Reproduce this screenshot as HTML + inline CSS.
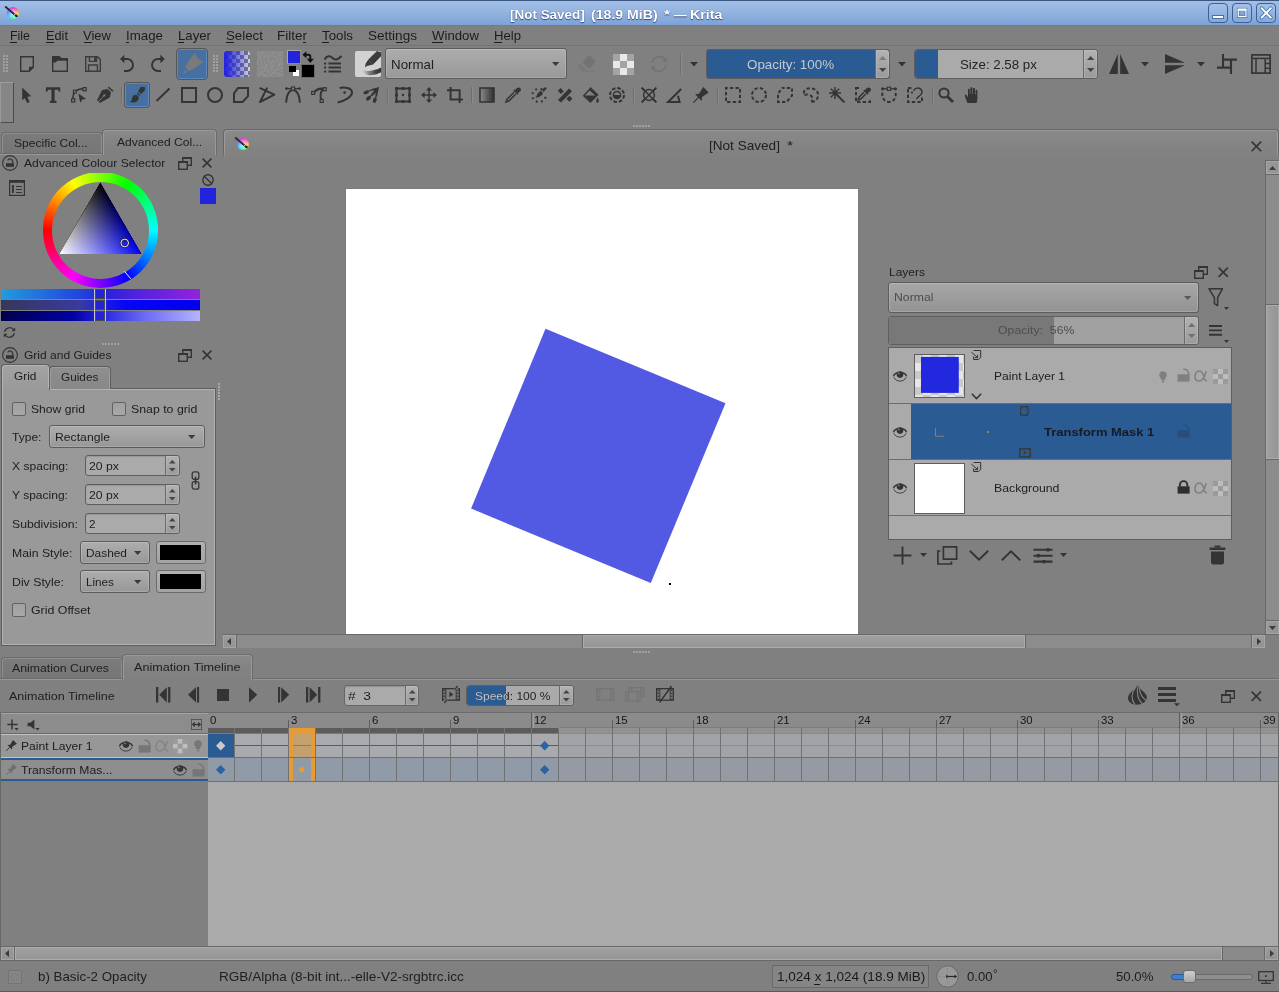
<!DOCTYPE html>
<html><head><meta charset="utf-8"><title>Krita</title>
<style>
html,body{margin:0;padding:0;}
body{width:1279px;height:992px;overflow:hidden;background:#808080;position:relative;font-family:"Liberation Sans",sans-serif;}
div,svg,span.t{position:absolute;box-sizing:border-box;}
span.t{white-space:pre;transform-origin:0 50%;line-height:normal;}
svg{overflow:visible;}
</style></head><body>
<div style="left:0px;top:0px;width:1279px;height:26px;background:linear-gradient(#a2bfe7,#94b4e1 45%,#7ba1d5);"></div>
<div style="left:0px;top:0px;width:1279px;height:1px;background:#3b5681;"></div>
<div style="left:0px;top:25px;width:1279px;height:1px;background:#5b80b6;"></div>
<div style="left:6.8px;top:6.7px;width:12.6px;height:12.6px;border-radius:50%;background:radial-gradient(circle at 48% 52%,rgba(235,235,255,.8) 0,rgba(235,235,255,.45) 30%,rgba(255,255,255,0) 64%),conic-gradient(from 0deg,#ff30e0,#ff5ca8 45deg,#ffc848 100deg,#c0ff48 135deg,#40ffb8 180deg,#30dcff 225deg,#4888ff 270deg,#b048ff 318deg,#ff30e0);"></div>
<svg style="left:4.1px;top:4px;" width="18" height="18" viewBox="0 0 18 18"><path d="M1.70 3.00 L12.40 11.90" stroke="#2a2a30" stroke-width="1.9" stroke-linecap="round"/><circle cx="10.80" cy="10.60" r="0.9" fill="#b8b8c0"/><ellipse cx="12.40" cy="11.90" rx="1.5" ry="1.1" transform="rotate(40 12.40 11.90)" fill="#18181c"/></svg>
<span class="t" style="left:510.30px;top:6.77px;font-size:13.4px;color:#fff;font-weight:bold;transform:scaleX(1.0046);text-shadow:0 1px 1px rgba(30,50,100,.75),0 0 1px rgba(40,60,110,.6);">[Not Saved]</span>
<span class="t" style="left:591.00px;top:6.77px;font-size:13.4px;color:#fff;font-weight:bold;transform:scaleX(1.0538);text-shadow:0 1px 1px rgba(30,50,100,.75),0 0 1px rgba(40,60,110,.6);">(18.9 MiB)</span>
<span class="t" style="left:664.40px;top:6.77px;font-size:13.4px;color:#fff;font-weight:bold;transform:scaleX(1.1698);text-shadow:0 1px 1px rgba(30,50,100,.75),0 0 1px rgba(40,60,110,.6);">*</span>
<span class="t" style="left:674.00px;top:6.77px;font-size:13.4px;color:#fff;font-weight:bold;transform:scaleX(0.9478);text-shadow:0 1px 1px rgba(30,50,100,.75),0 0 1px rgba(40,60,110,.6);">—</span>
<span class="t" style="left:690.20px;top:6.77px;font-size:13.4px;color:#fff;font-weight:bold;transform:scaleX(1.0645);text-shadow:0 1px 1px rgba(30,50,100,.75),0 0 1px rgba(40,60,110,.6);">Krita</span>
<div style="left:1208px;top:3px;width:20px;height:20px;border:1px solid #3f6092;border-radius:4px;background:linear-gradient(#a3c0e8,#86a9da);"></div>
<div style="left:1232px;top:3px;width:20px;height:20px;border:1px solid #3f6092;border-radius:4px;background:linear-gradient(#a3c0e8,#86a9da);"></div>
<div style="left:1256px;top:3px;width:20px;height:20px;border:1px solid #3f6092;border-radius:4px;background:linear-gradient(#a3c0e8,#86a9da);"></div>
<svg style="left:1208px;top:3px;" width="20" height="20" viewBox="0 0 20 20"><rect x="4.5" y="12.5" width="11" height="3" fill="#fff" stroke="#4670a8" stroke-width="1"/></svg>
<svg style="left:1232px;top:3px;" width="20" height="20" viewBox="0 0 20 20"><rect x="6.3" y="6.2" width="7.6" height="7.6" fill="#7fa4d6" stroke="#4670a8" stroke-width="2.6"/><rect x="6.3" y="6.4" width="7.6" height="7.2" fill="none" stroke="#fff" stroke-width="1.2"/><rect x="5.7" y="5.6" width="8.8" height="2.1" fill="#fff"/></svg>
<svg style="left:1256px;top:3px;" width="20" height="20" viewBox="0 0 20 20"><path d="M5.6 5.2 L14.8 14.6 M14.8 5.2 L5.6 14.6" stroke="#4670a8" stroke-width="3.6" stroke-linecap="round"/><path d="M5.6 5.2 L14.8 14.6 M14.8 5.2 L5.6 14.6" stroke="#fff" stroke-width="2" stroke-linecap="round"/></svg>
<div style="left:0px;top:45px;width:1279px;height:1px;background:#737373;"></div>
<span class="t" style="left:10.00px;top:28.86px;font-size:12.2px;color:#1c1c1c;transform:scaleX(1.0173);">File</span>
<div style="left:10px;top:42px;width:7px;height:1px;background:#1c1c1c;"></div>
<span class="t" style="left:46.00px;top:28.86px;font-size:12.2px;color:#1c1c1c;transform:scaleX(1.0465);">Edit</span>
<div style="left:46px;top:42px;width:8px;height:1px;background:#1c1c1c;"></div>
<span class="t" style="left:83.00px;top:28.86px;font-size:12.2px;color:#1c1c1c;transform:scaleX(1.0677);">View</span>
<div style="left:84px;top:42px;width:8px;height:1px;background:#1c1c1c;"></div>
<span class="t" style="left:126.00px;top:28.86px;font-size:12.2px;color:#1c1c1c;transform:scaleX(1.0912);">Image</span>
<div style="left:126px;top:42px;width:3px;height:1px;background:#1c1c1c;"></div>
<span class="t" style="left:178.00px;top:28.86px;font-size:12.2px;color:#1c1c1c;transform:scaleX(1.0813);">Layer</span>
<div style="left:178px;top:42px;width:6px;height:1px;background:#1c1c1c;"></div>
<span class="t" style="left:226.00px;top:28.86px;font-size:12.2px;color:#1c1c1c;transform:scaleX(1.0912);">Select</span>
<div style="left:226px;top:42px;width:8px;height:1px;background:#1c1c1c;"></div>
<span class="t" style="left:277.00px;top:28.86px;font-size:12.2px;color:#1c1c1c;transform:scaleX(1.1065);">Filter</span>
<div style="left:303px;top:42px;width:3px;height:1px;background:#1c1c1c;"></div>
<span class="t" style="left:322.00px;top:28.86px;font-size:12.2px;color:#1c1c1c;transform:scaleX(1.0884);">Tools</span>
<div style="left:322px;top:42px;width:7px;height:1px;background:#1c1c1c;"></div>
<span class="t" style="left:368.00px;top:28.86px;font-size:12.2px;color:#1c1c1c;transform:scaleX(1.1115);">Settings</span>
<div style="left:396px;top:42px;width:7px;height:1px;background:#1c1c1c;"></div>
<span class="t" style="left:432.00px;top:28.86px;font-size:12.2px;color:#1c1c1c;transform:scaleX(1.0831);">Window</span>
<div style="left:432px;top:42px;width:11px;height:1px;background:#1c1c1c;"></div>
<span class="t" style="left:494.00px;top:28.86px;font-size:12.2px;color:#1c1c1c;transform:scaleX(1.0760);">Help</span>
<div style="left:494px;top:42px;width:8px;height:1px;background:#1c1c1c;"></div>
<svg style="left:3px;top:55px;" width="6" height="18" viewBox="0 0 6 18"><rect x="0" y="0" width="2" height="2" fill="#a0a0a0"/><rect x="3" y="0" width="2" height="2" fill="#a0a0a0"/><rect x="0" y="3" width="2" height="2" fill="#a0a0a0"/><rect x="3" y="3" width="2" height="2" fill="#a0a0a0"/><rect x="0" y="6" width="2" height="2" fill="#a0a0a0"/><rect x="3" y="6" width="2" height="2" fill="#a0a0a0"/><rect x="0" y="9" width="2" height="2" fill="#a0a0a0"/><rect x="3" y="9" width="2" height="2" fill="#a0a0a0"/><rect x="0" y="12" width="2" height="2" fill="#a0a0a0"/><rect x="3" y="12" width="2" height="2" fill="#a0a0a0"/><rect x="0" y="15" width="2" height="2" fill="#a0a0a0"/><rect x="3" y="15" width="2" height="2" fill="#a0a0a0"/></svg>
<svg style="left:213px;top:55px;" width="6" height="18" viewBox="0 0 6 18"><rect x="0" y="0" width="2" height="2" fill="#a0a0a0"/><rect x="3" y="0" width="2" height="2" fill="#a0a0a0"/><rect x="0" y="3" width="2" height="2" fill="#a0a0a0"/><rect x="3" y="3" width="2" height="2" fill="#a0a0a0"/><rect x="0" y="6" width="2" height="2" fill="#a0a0a0"/><rect x="3" y="6" width="2" height="2" fill="#a0a0a0"/><rect x="0" y="9" width="2" height="2" fill="#a0a0a0"/><rect x="3" y="9" width="2" height="2" fill="#a0a0a0"/><rect x="0" y="12" width="2" height="2" fill="#a0a0a0"/><rect x="3" y="12" width="2" height="2" fill="#a0a0a0"/><rect x="0" y="15" width="2" height="2" fill="#a0a0a0"/><rect x="3" y="15" width="2" height="2" fill="#a0a0a0"/></svg>
<svg style="left:20px;top:56px;" width="14" height="16" viewBox="0 0 14 16"><path d="M0.7 0.7 H13.3 V11.2 L9.2 15.3 H0.7 Z" fill="none" stroke="#343434" stroke-width="1.4"/><path d="M13.6 10.8 H9 V15.4 Z" fill="#343434"/></svg>
<svg style="left:52px;top:56px;" width="16" height="16" viewBox="0 0 16 16"><path d="M0.7 0.7 V15.3 H15.3 V2.6" fill="none" stroke="#343434" stroke-width="1.4"/><path d="M0 0 H7.4 L9.6 2 H16 V4.8 H5.4 L3.6 6.5 H0 Z" fill="#343434"/></svg>
<svg style="left:85px;top:56px;" width="16" height="16" viewBox="0 0 16 16"><path d="M0.7 0.7 H12.6 L15.3 3.4 V15.3 H0.7 Z" fill="none" stroke="#3c3c3c" stroke-width="1.4"/><path d="M4.4 0.7 V5.4 H11.6 V0.7 M3.6 15.3 V9 H12.4 V15.3" fill="none" stroke="#3c3c3c" stroke-width="1.4"/><rect x="9" y="0.8" width="2.4" height="4.4" fill="#3c3c3c"/></svg>
<svg style="left:119px;top:55px;" width="16" height="18" viewBox="0 0 16 18"><path d="M4.6 4 H8 A6 6 0 0 1 8 16 H5" fill="none" stroke="#343434" stroke-width="1.9"/><path d="M1 4 L5.4 -0.2 V8.2 Z" fill="#343434"/></svg>
<svg style="left:151px;top:55px;" width="16" height="18" viewBox="0 0 16 18"><path d="M10.2 4 H7 A6 6 0 0 0 7 16 H10" fill="none" stroke="#343434" stroke-width="1.9"/><path d="M13.8 4 L9.4 -0.2 V8.2 Z" fill="#343434"/></svg>
<div style="left:176px;top:48px;width:32px;height:32px;background:#47709f;border:1px solid #5a5654;border-radius:4px;box-shadow:inset 0 0 0 1px #5a87c1;"></div>
<svg style="left:176.6px;top:48.3px;" width="31" height="31" viewBox="0 0 31 31"><path d="M18 4.7 C18.6 8.5 22 12 26.2 13.3 C22 18 16 22 11.2 22.8 L8.2 18.9 C11 14 14.5 8.5 18 4.7 Z M8.6 22.2 L10 23.4 L7.4 25.6 L6.2 24.6 Z" fill="#7a7a7a"/></svg>
<svg style="left:224px;top:51px;" width="26" height="26" viewBox="0 0 26 26"><defs><linearGradient id="gsw" x1="0" x2="1"><stop offset="0" stop-color="#2222dd"/><stop offset=".12" stop-color="#2222dd" stop-opacity=".93"/><stop offset="1" stop-color="#2222dd" stop-opacity=".08"/></linearGradient><clipPath id="gcl"><path d="M2 0 H24 L26 2 V24 L24 26 H2 Q0 26 0 24 V2 Q0 0 2 0 Z"/></clipPath></defs><g clip-path="url(#gcl)"><rect width="26" height="26" fill="#808080"/><rect x="0" y="0" width="4" height="4" fill="#e2e2e2"/><rect x="8" y="0" width="4" height="4" fill="#e2e2e2"/><rect x="16" y="0" width="4" height="4" fill="#e2e2e2"/><rect x="24" y="0" width="4" height="4" fill="#e2e2e2"/><rect x="4" y="4" width="4" height="4" fill="#e2e2e2"/><rect x="12" y="4" width="4" height="4" fill="#e2e2e2"/><rect x="20" y="4" width="4" height="4" fill="#e2e2e2"/><rect x="0" y="8" width="4" height="4" fill="#e2e2e2"/><rect x="8" y="8" width="4" height="4" fill="#e2e2e2"/><rect x="16" y="8" width="4" height="4" fill="#e2e2e2"/><rect x="24" y="8" width="4" height="4" fill="#e2e2e2"/><rect x="4" y="12" width="4" height="4" fill="#e2e2e2"/><rect x="12" y="12" width="4" height="4" fill="#e2e2e2"/><rect x="20" y="12" width="4" height="4" fill="#e2e2e2"/><rect x="0" y="16" width="4" height="4" fill="#e2e2e2"/><rect x="8" y="16" width="4" height="4" fill="#e2e2e2"/><rect x="16" y="16" width="4" height="4" fill="#e2e2e2"/><rect x="24" y="16" width="4" height="4" fill="#e2e2e2"/><rect x="4" y="20" width="4" height="4" fill="#e2e2e2"/><rect x="12" y="20" width="4" height="4" fill="#e2e2e2"/><rect x="20" y="20" width="4" height="4" fill="#e2e2e2"/><rect x="0" y="24" width="4" height="4" fill="#e2e2e2"/><rect x="8" y="24" width="4" height="4" fill="#e2e2e2"/><rect x="16" y="24" width="4" height="4" fill="#e2e2e2"/><rect x="24" y="24" width="4" height="4" fill="#e2e2e2"/><rect width="26" height="26" fill="url(#gsw)"/></g></svg>
<svg style="left:257px;top:51px;" width="26" height="26" viewBox="0 0 26 26"><defs><filter id="nz" x="0" y="0" width="100%" height="100%" color-interpolation-filters="sRGB"><feTurbulence type="fractalNoise" baseFrequency="0.55" numOctaves="2" seed="3"/><feColorMatrix type="matrix" values="0 0 0 0 0.62  0 0 0 0 0.62  0 0 0 0 0.62  2.2 0 0 0 -0.7"/></filter></defs><rect width="26" height="26" fill="#848484"/><rect width="26" height="26" fill="#8c8c8c" filter="url(#nz)" opacity=".6"/></svg>
<div style="left:287px;top:50px;width:14px;height:14px;background:#2323dd;border:1px solid #a6a6a6;border-right-color:#8a8a8a;border-bottom-color:#8a8a8a;"></div>
<div style="left:301px;top:64px;width:14px;height:14px;background:#000;border:1px solid #6a6a6a;"></div>
<svg style="left:302px;top:50px;" width="14" height="14" viewBox="0 0 14 14"><path d="M3.6 4.7 H6.4 Q8.3 4.7 8.3 6.6 V9.4" fill="none" stroke="#111" stroke-width="1.9"/><path d="M0.4 4.7 L4.4 1.2 V8.2 Z M8.3 12.9 L4.7 8.7 H11.9 Z" fill="#111"/></svg>
<div style="left:293px;top:70px;width:6px;height:6px;background:#fff;"></div>
<div style="left:289px;top:66px;width:7px;height:6px;background:#000;"></div>
<svg style="left:323px;top:54px;" width="20" height="20" viewBox="0 0 20 20"><path d="M1.5 5.5 C4 1.5 7 1.5 9.5 4 C12 6.5 15 6 18.5 2" fill="none" stroke="#343434" stroke-width="2"/><path d="M5.5 9.5 H18 M5.5 13.5 H18 M5.5 17.5 H18" stroke="#343434" stroke-width="1.8"/><rect x="1" y="8.6" width="2.2" height="1.9" fill="#343434"/><rect x="1" y="12.6" width="2.2" height="1.9" fill="#343434"/><rect x="1" y="16.6" width="2.2" height="1.9" fill="#343434"/></svg>
<div style="left:355px;top:51px;width:26.3px;height:26.3px;background:#d2d2d2;border-radius:2px;"></div>
<svg style="left:355px;top:51px;" width="26.3" height="26.3" viewBox="0 0 26.3 26.3"><defs><linearGradient id="bs" x1="0" x2="1"><stop offset="0" stop-color="#bdbdbd" stop-opacity=".3"/><stop offset=".3" stop-color="#8c8c8c"/><stop offset=".7" stop-color="#454545"/><stop offset="1" stop-color="#303030"/></linearGradient><linearGradient id="pb" x1="0" y1="0" x2="1" y2="1"><stop offset="0" stop-color="#1e1e1e"/><stop offset=".5" stop-color="#3e3e3e"/><stop offset="1" stop-color="#242424"/></linearGradient><clipPath id="bpc"><rect width="26.3" height="26.3" rx="2"/></clipPath></defs><g clip-path="url(#bpc)"><path d="M7.3 17.4 C8.4 19.6 13 20.6 17.2 19.6 C21 18.8 24 17.8 26.3 16.6 V21.2 C23 22.8 20 23.8 16.6 24.1 C12 24.4 7.4 22.6 7.3 17.4 Z" fill="url(#bs)"/><path d="M22 0 L26.3 1.5 V5.1 L18 13.6 L12 14.9 L9.9 16.4 L10.7 12.4 L13.2 8.7 Z" fill="url(#pb)"/><path d="M13.4 9 L17.8 13.4 M16 6.4 L24 -1" stroke="#666" stroke-width=".7" opacity=".8"/></g></svg>
<div style="left:385px;top:48px;width:182px;height:31px;background:linear-gradient(#adadad,#989898);border:1px solid #5c5c5c;border-radius:3px;box-shadow:inset 0 0 0 1px rgba(255,255,255,.16);"></div>
<span class="t" style="left:391.00px;top:58.06px;font-size:12.2px;color:#1e1e1e;transform:scaleX(1.0936);">Normal</span>
<svg style="left:551.8px;top:61.9px;" width="7.4" height="4.2" viewBox="0 0 7.4 4.2"><path d="M0 0 H7.4 L3.7 4.1 Z" fill="#3a3a3a"/></svg>
<svg style="left:577px;top:55px;" width="20" height="18" viewBox="0 0 20 18"><path d="M12 0.1 L19 6.7 L12 13.7 L5.4 6.7 Z" fill="#737373"/><path d="M3.3 8.4 L0.3 11.5 L5.4 16.5 H11 Z" fill="#787878"/><path d="M5 16.2 H18.2" stroke="#787878" stroke-width="1.1"/></svg>
<svg style="left:613px;top:54px;" width="21" height="21" viewBox="0 0 21 21"><rect x="0" y="0" width="7" height="7" fill="#a4a4a4"/><rect x="7" y="0" width="7" height="7" fill="#e9e9e9"/><rect x="14" y="0" width="7" height="7" fill="#a4a4a4"/><rect x="0" y="7" width="7" height="7" fill="#e9e9e9"/><rect x="7" y="7" width="7" height="7" fill="#a4a4a4"/><rect x="14" y="7" width="7" height="7" fill="#e9e9e9"/><rect x="0" y="14" width="7" height="7" fill="#a4a4a4"/><rect x="7" y="14" width="7" height="7" fill="#e9e9e9"/><rect x="14" y="14" width="7" height="7" fill="#a4a4a4"/></svg>
<svg style="left:650px;top:55px;" width="18" height="18" viewBox="0 0 18 18"><path d="M2.2 8 A7 7 0 0 1 15.2 5.2 M15.8 10 A7 7 0 0 1 2.8 12.8" fill="none" stroke="#747474" stroke-width="1.7"/><path d="M16.8 2.2 V7 H12 Z M1.2 15.8 V11 H6 Z" fill="#747474"/></svg>
<div style="left:680px;top:54px;width:1px;height:20px;background:#6d6d6d;"></div>
<div style="left:681px;top:54px;width:1px;height:20px;background:#8e8e8e;"></div>
<svg style="left:690px;top:62px;" width="8" height="5" viewBox="0 0 8 5"><path d="M0 0 H8 L4 4.6 Z" fill="#343434"/></svg>
<div style="left:706px;top:49px;width:184px;height:30px;background:#2a5b92;border:1px solid #5d5d5d;border-radius:3px;"></div>
<div style="left:875px;top:50px;width:14px;height:28px;background:linear-gradient(#b2b2b2,#9a9a9a);border-left:1px solid #6a6a6a;border-radius:0 3px 3px 0;box-shadow:inset 1px 1px 0 rgba(255,255,255,.14),inset -1px -1px 0 rgba(255,255,255,.14);"></div>
<svg style="left:878.8px;top:56.12px;" width="7.4" height="4" viewBox="0 0 7.4 4"><path d="M0 4 L3.7 0 L7.4 4 Z" fill="#7c7c7c"/></svg>
<svg style="left:878.8px;top:67.88px;" width="7.4" height="4" viewBox="0 0 7.4 4"><path d="M0 0 L3.7 4 L7.4 0 Z" fill="#444444"/></svg>
<span class="t" style="left:746.80px;top:58.06px;font-size:12.2px;color:#c4c9d2;transform:scaleX(1.0990);">Opacity: 100%</span>
<svg style="left:898px;top:62px;" width="8" height="5" viewBox="0 0 8 5"><path d="M0 0 H8 L4 4.6 Z" fill="#343434"/></svg>
<div style="left:914px;top:49px;width:184px;height:30px;background:#aaaaaa;border:1px solid #5d5d5d;border-radius:3px;"></div>
<div style="left:915px;top:50px;width:23px;height:28px;background:#2a5b92;border-radius:2px 0 0 2px;"></div>
<div style="left:1083px;top:50px;width:14px;height:28px;background:linear-gradient(#b2b2b2,#9a9a9a);border-left:1px solid #6a6a6a;border-radius:0 3px 3px 0;box-shadow:inset 1px 1px 0 rgba(255,255,255,.14),inset -1px -1px 0 rgba(255,255,255,.14);"></div>
<svg style="left:1086.8px;top:56.12px;" width="7.4" height="4" viewBox="0 0 7.4 4"><path d="M0 4 L3.7 0 L7.4 4 Z" fill="#444444"/></svg>
<svg style="left:1086.8px;top:67.88px;" width="7.4" height="4" viewBox="0 0 7.4 4"><path d="M0 0 L3.7 4 L7.4 0 Z" fill="#444444"/></svg>
<span class="t" style="left:960.00px;top:58.06px;font-size:12.2px;color:#242424;transform:scaleX(1.0917);">Size: 2.58 px</span>
<svg style="left:1109px;top:54px;" width="20" height="20" viewBox="0 0 20 20"><path d="M0 20 L8.8 0 V20 Z M11.2 0 L20 20 H11.2 Z" fill="#343434"/></svg>
<svg style="left:1141px;top:62px;" width="8" height="5" viewBox="0 0 8 5"><path d="M0 0 H8 L4 4.6 Z" fill="#343434"/></svg>
<svg style="left:1165px;top:54px;" width="20" height="20" viewBox="0 0 20 20"><path d="M0 0 L20 8.8 H0 Z M0 11.2 H20 L0 20 Z" fill="#343434"/></svg>
<svg style="left:1197px;top:62px;" width="8" height="5" viewBox="0 0 8 5"><path d="M0 0 H8 L4 4.6 Z" fill="#343434"/></svg>
<svg style="left:1217px;top:54px;" width="20" height="20" viewBox="0 0 20 20"><path d="M6 0 V13.6 M0 13.6 H15 M6 5.6 H20 M14 5.6 V20" fill="none" stroke="#343434" stroke-width="2.1"/></svg>
<svg style="left:1251px;top:54px;" width="20" height="20" viewBox="0 0 20 20"><rect x="0.9" y="0.9" width="18.2" height="18.2" fill="none" stroke="#343434" stroke-width="1.7"/><path d="M1 4.4 H19" stroke="#343434" stroke-width="1.5"/><path d="M5 4.4 V19 M14.2 4.4 V19 M14.2 9.4 H19 M14.2 14.2 H19" fill="none" stroke="#343434" stroke-width="1.5"/></svg>
<div style="left:0px;top:82px;width:14px;height:41px;background:#868686;border-top:1px solid #9e9e9e;border-left:1px solid #9a9a9a;border-right:1px solid #4c4c4c;border-bottom:1px solid #4c4c4c;"></div>
<svg style="left:18px;top:87px;" width="16" height="16" viewBox="0 0 16 16"><path transform="translate(0.7,0.5)" d="M3.5 0 L12.6 8.8 L8.6 9.2 L11 14.4 L8.4 15.6 L6 10.4 L3.5 13 Z" fill="#343434"/></svg>
<svg style="left:44px;top:87px;" width="16" height="16" viewBox="0 0 16 16"><path d="M1.9 0.25 H16.25 V4.75 H14.9 L14.3 2.85 H10.6 V13.75 H12.5 V15.9 H5.9 V13.75 H7.5 V2.85 H3.9 L3.2 4.75 H1.9 Z" fill="#343434"/></svg>
<svg style="left:71px;top:87px;" width="16" height="16" viewBox="0 0 16 16"><path d="M1.8 12 C1.8 5 5 2 12 1.8" fill="none" stroke="#343434" stroke-width="1.5" stroke-width="1.6"/><rect x="0.6" y="11.8" width="3.2" height="3.2" fill="#808080" stroke="#343434" stroke-width="1.2"/><rect x="12" y="0.6" width="3.2" height="3.2" fill="#808080" stroke="#343434" stroke-width="1.2"/><rect x="2.4" y="3.2" width="2.8" height="2.8" fill="#808080" stroke="#343434" stroke-width="1.1"/><path d="M7.4 6.6 L15.2 12 L11.4 12.4 L9.2 15.8 Z" fill="#343434"/></svg>
<svg style="left:96px;top:87px;" width="16" height="16" viewBox="0 0 16 16"><path d="M6.1 3 L11.5 2.1 L15 5.3 L13.8 10.5 L3.8 16 L1 13.2 Z" fill="#343434"/><circle cx="8.3" cy="8.4" r="1.15" fill="#808080"/><path d="M8.1 8.6 L2.2 14.8" stroke="#808080" stroke-width="0.95"/><path d="M12.2 0.1 L17 4.3" stroke="#343434" stroke-width="1.5"/></svg>
<div style="left:121px;top:87px;width:1px;height:16px;background:#6e6e6e;"></div>
<div style="left:122px;top:87px;width:1px;height:16px;background:#8c8c8c;"></div>
<div style="left:124px;top:82px;width:26px;height:26px;background:#47709f;border:1px solid #5a5654;border-radius:3px;box-shadow:inset 0 0 0 1px #5a87c1;"></div>
<svg style="left:129px;top:87px;" width="16" height="16" viewBox="0 0 16 16"><path d="M11.6 0.1 H15.9 L16.1 3 L12.3 6.9 L9.2 4.5 Z" fill="#343434"/><path d="M7.8 6.2 L8.9 5.6 L11.3 8 L10.6 8.9 Z" fill="#343434"/><path d="M4.1 8.8 C5.4 7.6 7.4 7.6 8.6 8.6 C10.2 10 10.2 12.4 8.4 14 C6.4 15.8 3 16.2 0.6 14.6 C2.2 14.2 2.8 13.4 3 12 C3.1 10.6 3.4 9.6 4.1 8.8 Z" fill="#343434"/></svg>
<svg style="left:155px;top:87px;" width="16" height="16" viewBox="0 0 16 16"><path d="M1.5 14 L14.5 1.5" fill="none" stroke="#343434" stroke-width="2"/></svg>
<svg style="left:181px;top:87px;" width="16" height="16" viewBox="0 0 16 16"><rect x="1" y="1" width="14" height="14" fill="none" stroke="#343434" stroke-width="2"/></svg>
<svg style="left:207px;top:87px;" width="16" height="16" viewBox="0 0 16 16"><circle cx="8" cy="8" r="7" fill="none" stroke="#343434" stroke-width="2"/></svg>
<svg style="left:233px;top:87px;" width="16" height="16" viewBox="0 0 16 16"><path d="M5 1 H15 V9.2 L9.6 15 H1 V6.4 Z" fill="none" stroke="#343434" stroke-width="2"/></svg>
<svg style="left:259px;top:87px;" width="16" height="16" viewBox="0 0 16 16"><path d="M8.2 0.6 L1 15 L15.4 7.6 L0.6 0.8" fill="none" stroke="#343434" stroke-width="2" stroke-linejoin="round"/></svg>
<svg style="left:285px;top:87px;" width="16" height="16" viewBox="0 0 16 16"><path d="M1.2 15.8 C1.5 6.5 5 3 8 3 C11 3 14.5 6.5 14.8 15.8" fill="none" stroke="#343434" stroke-width="2"/><path d="M1 1.6 H15" stroke="#343434" stroke-width="1.3"/><circle cx="1.4" cy="1.6" r="1.4" fill="#343434"/><circle cx="14.6" cy="1.6" r="1.4" fill="#343434"/><rect x="6.4" y="0" width="3.2" height="3.2" fill="#808080" stroke="#343434" stroke-width="1.1"/></svg>
<svg style="left:311px;top:87px;" width="16" height="16" viewBox="0 0 16 16"><path d="M3 5.6 C6 1.6 9 1.2 12.6 1.8 C9 5 9 10 10.4 13" fill="none" stroke="#343434" stroke-width="2"/><rect x="0.7" y="4.4" width="3" height="3" fill="#808080" stroke="#343434" stroke-width="1.2"/><rect x="12.2" y="0.7" width="3" height="3" fill="#808080" stroke="#343434" stroke-width="1.2"/><rect x="9.2" y="12.4" width="3" height="3" fill="#808080" stroke="#343434" stroke-width="1.2"/></svg>
<svg style="left:337px;top:87px;" width="16" height="16" viewBox="0 0 16 16"><path d="M2.6 1 C8 -0.4 14.6 1.2 15 5 C15.4 9.6 8 13.8 0.6 15.4" fill="none" stroke="#343434" stroke-width="2"/><circle cx="7.6" cy="5.6" r="1.4" fill="#343434"/></svg>
<svg style="left:363px;top:87px;" width="16" height="16" viewBox="0 0 16 16"><path d="M16 0 L8 2.2 L8.6 3.8 L11.4 3.4 L8 7.6 L9.4 8.9 L12.8 5.8 L12.2 9.4 L14 9.8 Z" fill="#343434"/><ellipse cx="3.2" cy="5.3" rx="2.9" ry="1.7" transform="rotate(-22 3.2 5.3)" fill="#343434"/><path d="M5.8 4.2 L8 3" stroke="#343434" stroke-width="1.2"/><ellipse cx="5.6" cy="11.2" rx="2.9" ry="1.8" transform="rotate(-42 5.6 11.2)" fill="#343434"/><path d="M7.4 9.4 L8.8 8" stroke="#343434" stroke-width="1.2"/><ellipse cx="11.8" cy="13.2" rx="1.8" ry="2.8" transform="rotate(18 11.8 13.2)" fill="#343434"/><path d="M12.6 10.8 L13 9.4" stroke="#343434" stroke-width="1.2"/></svg>
<div style="left:387px;top:87px;width:1px;height:16px;background:#6e6e6e;"></div>
<div style="left:388px;top:87px;width:1px;height:16px;background:#8c8c8c;"></div>
<svg style="left:395px;top:87px;" width="16" height="16" viewBox="0 0 16 16"><rect x="1.5" y="1.5" width="13" height="13" fill="none" stroke="#343434" stroke-width="2"/><circle cx="8" cy="8" r="1.2" fill="#343434"/><rect x="0.0" y="0.0" width="3" height="3" rx="1" fill="#343434"/><rect x="0.0" y="6.5" width="3" height="3" rx="1" fill="#343434"/><rect x="0.0" y="13.0" width="3" height="3" rx="1" fill="#343434"/><rect x="6.5" y="0.0" width="3" height="3" rx="1" fill="#343434"/><rect x="6.5" y="13.0" width="3" height="3" rx="1" fill="#343434"/><rect x="13.0" y="0.0" width="3" height="3" rx="1" fill="#343434"/><rect x="13.0" y="6.5" width="3" height="3" rx="1" fill="#343434"/><rect x="13.0" y="13.0" width="3" height="3" rx="1" fill="#343434"/></svg>
<svg style="left:421px;top:87px;" width="16" height="16" viewBox="0 0 16 16"><path d="M8 2 V14 M2 8 H14" fill="none" stroke="#343434" stroke-width="1.5" stroke-width="1.7"/><path d="M8 0 L11 3.6 H5 Z M8 16 L11 12.4 H5 Z M0 8 L3.6 5 V11 Z M16 8 L12.4 5 V11 Z" fill="#343434"/></svg>
<svg style="left:447px;top:87px;" width="16" height="16" viewBox="0 0 16 16"><path d="M3.6 0 V12.4 H16 M0 3.2 H12.6 V16" fill="none" stroke="#343434" stroke-width="2" stroke-width="2.1"/></svg>
<div style="left:471px;top:87px;width:1px;height:16px;background:#6e6e6e;"></div>
<div style="left:472px;top:87px;width:1px;height:16px;background:#8c8c8c;"></div>
<svg style="left:479px;top:87px;" width="16" height="16" viewBox="0 0 16 16"><defs><linearGradient id="tg" x1="0" x2="1"><stop offset="0" stop-color="#8c8c8c"/><stop offset="1" stop-color="#2e2e2e"/></linearGradient></defs><rect x="1" y="1" width="14" height="14" fill="url(#tg)" stroke="#343434" stroke-width="1.6"/></svg>
<svg style="left:505px;top:87px;" width="16" height="16" viewBox="0 0 16 16"><path d="M10.4 3.2 C11 0.4 14 -0.4 15.4 1.2 C16.8 2.8 15.4 5.4 12.8 5.6 L13.6 6.6 L12.4 7.8 L8.2 3.6 L9.4 2.4 Z" fill="#343434"/><path d="M9 5.2 L2 12.2 L1 15 L3.8 14 L10.8 7" fill="none" stroke="#343434" stroke-width="1.5" stroke-width="1.5"/></svg>
<svg style="left:531px;top:87px;" width="16" height="16" viewBox="0 0 16 16"><path d="M10.6 2.8 L14.4 0 L15.8 1.4 L12.6 5 Z M9.8 3.8 L12 6 C11 9 8 11 4 10.6 C6 9.6 5.6 8 6.6 6.6 C7.4 5.4 8.6 4.4 9.8 3.8 Z" fill="#343434"/><path d="M13.26 10.32 L15.33 11.07" stroke="#343434" stroke-width="1.8"/><path d="M10.37 13.48 L11.30 15.47" stroke="#343434" stroke-width="1.8"/><path d="M6.08 13.66 L5.33 15.73" stroke="#343434" stroke-width="1.8"/><path d="M2.92 10.77 L0.93 11.70" stroke="#343434" stroke-width="1.8"/><path d="M2.74 6.48 L0.67 5.73" stroke="#343434" stroke-width="1.8"/><path d="M5.63 3.32 L4.70 1.33" stroke="#343434" stroke-width="1.8"/><path d="M9.92 3.14 L10.67 1.07" stroke="#343434" stroke-width="1.8"/></svg>
<svg style="left:557px;top:87px;" width="16" height="16" viewBox="0 0 16 16"><path d="M1 13 L12 1.4 L15 4.2 L4 15.6 Z" fill="#343434"/><path d="M3.6 1 L6.8 4.2 L4 7 L0.8 3.8 Z M12.4 8.8 L15.4 11.8 L12.4 14.8 L9.4 11.8 Z" fill="#343434"/></svg>
<svg style="left:583px;top:87px;" width="16" height="16" viewBox="0 0 16 16"><path d="M7 0.6 L15 8.4" fill="none" stroke="#343434" stroke-width="1.5" stroke-width="1.6"/><path d="M6.6 2.4 L0.8 8.6 L7.4 15 L13.6 8.6 Z" fill="none" stroke="#343434" stroke-width="1.5" stroke-width="1.5"/><path d="M1.6 8.6 H13.2 L7.4 14.4 Z" fill="#343434"/><path d="M14.6 10.4 C16 12.6 16.2 14.4 15.2 15.4 C14.2 16 13.2 15.4 13.2 14.2 C13.2 13 13.8 11.8 14.6 10.4 Z" fill="#343434"/></svg>
<svg style="left:609px;top:87px;" width="16" height="16" viewBox="0 0 16 16"><circle cx="8" cy="8" r="7" fill="none" stroke="#343434" stroke-width="2" stroke-dasharray="3.6 1.9"/><circle cx="8" cy="8" r="3.6" fill="none" stroke="#343434" stroke-width="1.5" stroke-width="1.3"/><path d="M4.4 8 H11.6 A3.6 3.6 0 0 1 4.4 8 Z" fill="#343434"/></svg>
<div style="left:633px;top:87px;width:1px;height:16px;background:#6e6e6e;"></div>
<div style="left:634px;top:87px;width:1px;height:16px;background:#8c8c8c;"></div>
<svg style="left:641px;top:87px;" width="16" height="16" viewBox="0 0 16 16"><circle cx="8" cy="8" r="5.4" fill="none" stroke="#343434" stroke-width="1.5" stroke-width="1.3"/><path d="M1 1 L15 15 M15 1 L1 15" fill="none" stroke="#343434" stroke-width="1.5" stroke-width="1.2"/><path d="M0.6 0.6 L4.4 4.4 M15.4 0.6 L11.6 4.4 M0.6 15.4 L4.4 11.6 M15.4 15.4 L11.6 11.6" fill="none" stroke="#343434" stroke-width="2" stroke-width="2.2"/></svg>
<svg style="left:667px;top:87px;" width="16" height="16" viewBox="0 0 16 16"><path d="M14.2 2 L1 15 H12.6 L11 8.8" fill="none" stroke="#343434" stroke-width="2" stroke-width="1.9" stroke-linejoin="miter"/></svg>
<svg style="left:693px;top:87px;" width="16" height="16" viewBox="0 0 16 16"><path d="M10.2 0 L15.7 5.5 L9.1 9.9 L8.6 13.9 L2.1 7.2 L6 6.8 Z" fill="#343434"/><path d="M5.6 10.4 L0.3 15.7" stroke="#343434" stroke-width="1.2"/></svg>
<div style="left:717px;top:87px;width:1px;height:16px;background:#6e6e6e;"></div>
<div style="left:718px;top:87px;width:1px;height:16px;background:#8c8c8c;"></div>
<svg style="left:725px;top:87px;" width="16" height="16" viewBox="0 0 16 16"><rect x="1" y="1" width="14" height="14" fill="none" stroke="#343434" stroke-width="2" stroke-dasharray="3.4 2.2" stroke-dashoffset="1.7"/></svg>
<svg style="left:751px;top:87px;" width="16" height="16" viewBox="0 0 16 16"><circle cx="8" cy="8" r="7" fill="none" stroke="#343434" stroke-width="2" stroke-dasharray="3.4 2.2" stroke-dasharray="3.3 2.2"/></svg>
<svg style="left:777px;top:87px;" width="16" height="16" viewBox="0 0 16 16"><path d="M5.4 1 H15 V8.6 L9.6 15 H1 V6.4 Z" fill="none" stroke="#343434" stroke-width="2" stroke-dasharray="3.4 2.2" stroke-dashoffset="1.2"/></svg>
<svg style="left:803px;top:87px;" width="16" height="16" viewBox="0 0 16 16"><path d="M1 6.4 C0 2.4 5 0.6 9 1.4 C13 2.2 15.8 5.4 15 9.4 C14.4 12.6 11.4 15.4 8.6 14.6" fill="none" stroke="#343434" stroke-width="2" stroke-dasharray="3.4 2.2" stroke-dasharray="3 2"/><path d="M1.4 8 C4 7 8 7.8 9 10 C9.8 12 9.4 13.6 8.4 14.6" fill="none" stroke="#343434" stroke-width="2" stroke-dasharray="3.4 2.2" stroke-dasharray="3 2"/></svg>
<svg style="left:829px;top:87px;" width="16" height="16" viewBox="0 0 16 16"><path d="M7 7 L15.4 15.4" fill="none" stroke="#343434" stroke-width="2" stroke-width="2"/><path d="M6 0 V12 M0 6 H12 M1.8 1.8 L10.2 10.2 M10.2 1.8 L1.8 10.2" fill="none" stroke="#343434" stroke-width="1.5" stroke-width="1.7"/></svg>
<svg style="left:855px;top:87px;" width="16" height="16" viewBox="0 0 16 16"><rect x="1" y="1" width="14" height="14" fill="none" stroke="#343434" stroke-width="2" stroke-dasharray="3.4 2.2" stroke-dashoffset="1.7"/><rect x="3" y="0" width="13" height="12" fill="#808080"/><path d="M10.4 3.2 C11 0.4 14 -0.4 15.4 1.2 C16.8 2.8 15.4 5.4 12.8 5.6 L13.6 6.6 L12.4 7.8 L8.2 3.6 L9.4 2.4 Z" fill="#343434"/><path d="M9 5.2 L4 10.2 L3.2 12.8 L5.8 12 L10.8 7" fill="none" stroke="#343434" stroke-width="1.5" stroke-width="1.3"/><path d="M1 1 H4" fill="none" stroke="#343434" stroke-width="2"/></svg>
<svg style="left:881px;top:87px;" width="16" height="16" viewBox="0 0 16 16"><path d="M1.4 5.6 C0.6 10 3 15 8 15 C13 15 15.4 10 14.6 5.6" fill="none" stroke="#343434" stroke-width="2" stroke-dasharray="3.4 2.2" stroke-dasharray="3 2.1"/><path d="M1.4 1.8 H14.6" stroke="#343434" stroke-width="1.3"/><circle cx="1.6" cy="1.8" r="1.6" fill="#343434"/><circle cx="14.4" cy="1.8" r="1.6" fill="#343434"/><rect x="6.2" y="0.2" width="3.4" height="3.2" fill="#808080" stroke="#343434" stroke-width="1.1"/></svg>
<svg style="left:907px;top:87px;" width="16" height="16" viewBox="0 0 16 16"><path d="M1 1 V15 H15 V10" fill="none" stroke="#343434" stroke-width="2" stroke-dasharray="3.4 2.2" stroke-dashoffset="-1"/><path d="M1 1 H4.4" fill="none" stroke="#343434" stroke-width="2"/><path d="M6.6 3.6 C8 0.6 12.6 0.2 14.4 3 C16 5.6 14 8 11.6 9.6 L9.4 12" fill="none" stroke="#343434" stroke-width="1.5" stroke-width="1.6"/><circle cx="5" cy="5.6" r="1.1" fill="#343434"/></svg>
<div style="left:932px;top:87px;width:1px;height:16px;background:#6e6e6e;"></div>
<div style="left:933px;top:87px;width:1px;height:16px;background:#8c8c8c;"></div>
<svg style="left:938px;top:87px;" width="16" height="16" viewBox="0 0 16 16"><circle cx="6" cy="6" r="4.6" fill="none" stroke="#343434" stroke-width="2" stroke-width="2.2"/><path d="M9.4 9.4 L15 15" stroke="#343434" stroke-width="2.8"/></svg>
<svg style="left:964px;top:87px;" width="16" height="16" viewBox="0 0 16 16"><path d="M3.4 16 L1 9.4 C0.4 7.8 1.6 7 2.6 8.2 L4 10.4 V2.6 C4 1.4 5.8 1.4 5.8 2.6 V7 H6.4 V1.2 C6.4 0 8.4 0 8.4 1.2 V7 H9 V1.8 C9 0.6 11 0.6 11 1.8 V7.4 H11.6 V3.6 C11.6 2.4 13.4 2.4 13.4 3.6 V12 L12.6 16 Z" fill="#343434"/></svg>
<svg style="left:633px;top:125px;" width="18" height="2" viewBox="0 0 18 2"><rect x="0" y="0" width="2" height="2" fill="#a0a0a0"/><rect x="3" y="0" width="2" height="2" fill="#a0a0a0"/><rect x="6" y="0" width="2" height="2" fill="#a0a0a0"/><rect x="9" y="0" width="2" height="2" fill="#a0a0a0"/><rect x="12" y="0" width="2" height="2" fill="#a0a0a0"/><rect x="15" y="0" width="2" height="2" fill="#a0a0a0"/></svg>
<div style="left:0px;top:153px;width:103px;height:1px;background:#6c6c6c;"></div>
<div style="left:0px;top:154px;width:103px;height:1px;background:#979797;"></div>
<div style="left:1px;top:132px;width:102px;height:21px;background:linear-gradient(#7b7b7b,#767676);border:1px solid #6c6c6c;border-bottom:none;border-radius:4px 4px 0 0;box-shadow:inset 1px 1px 0 #8f8f8f,inset -1px 0 0 #8f8f8f;"></div>
<span class="t" style="left:13.60px;top:136.94px;font-size:10.9px;color:#202020;transform:scaleX(1.1060);">Specific Col...</span>
<div style="left:102px;top:129px;width:115px;height:26px;background:linear-gradient(#8a8a8a,#828282 60%,#808080);border:1px solid #6c6c6c;border-bottom:none;border-radius:4px 4px 0 0;box-shadow:inset 1px 1px 0 #999,inset -1px 0 0 #999;"></div>
<span class="t" style="left:116.50px;top:135.94px;font-size:10.9px;color:#202020;transform:scaleX(1.1085);">Advanced Col...</span>
<svg style="left:2px;top:155px;" width="16" height="16" viewBox="0 0 16 16"><circle cx="8" cy="8" r="7.4" fill="none" stroke="#343434" stroke-width="1.1"/><rect x="4" y="8.2" width="7.9" height="3.6" fill="#343434"/><path d="M10.7 8.4 V6.6 A2.6 2.6 0 0 0 5.7 5.6" fill="none" stroke="#343434" stroke-width="1.2"/></svg>
<span class="t" style="left:24.30px;top:157.14px;font-size:10.9px;color:#202020;transform:scaleX(1.1174);">Advanced Colour Selector</span>
<svg style="left:178px;top:156.5px;" width="14" height="13" viewBox="0 0 14 13"><rect x="4.7" y="0.7" width="8.6" height="7.6" fill="#808080" stroke="#343434" stroke-width="1.4"/><rect x="4" y="0" width="10" height="2" fill="#343434"/><rect x="0.7" y="4.7" width="8.6" height="7.6" fill="#808080" stroke="#343434" stroke-width="1.4"/><rect x="0" y="4" width="10" height="2" fill="#343434"/></svg>
<svg style="left:202.3px;top:158.2px;" width="10" height="10" viewBox="0 0 10 10"><path d="M0.6 0.6 L9.4 9.4 M9.4 0.6 L0.6 9.4" stroke="#343434" stroke-width="1.6"/></svg>
<svg style="left:202px;top:174px;" width="12" height="12" viewBox="0 0 12 12"><circle cx="6" cy="6" r="5.2" fill="none" stroke="#343434" stroke-width="1.4"/><path d="M2.4 2.4 L9.6 9.6" stroke="#343434" stroke-width="1.4"/></svg>
<div style="left:200px;top:188px;width:16px;height:16px;background:#2323dc;"></div>
<svg style="left:9px;top:180px;" width="16" height="16" viewBox="0 0 16 16"><rect x="0.6" y="0.6" width="14.8" height="14.8" fill="none" stroke="#343434" stroke-width="1.2"/><path d="M0.6 1.6 H15.4" stroke="#343434" stroke-width="2.4"/><path d="M3.9 5 V13" stroke="#343434" stroke-width="1.9"/><path d="M7 6.5 H12.9 M7 9.5 H12.9 M7 12.5 H12.9" stroke="#343434" stroke-width="1.05"/></svg>
<div style="left:42.5px;top:172.39999999999998px;width:115.6px;height:115.6px;border-radius:50%;background:conic-gradient(from -90deg,#f00,#ff0,#0f0,#0ff,#00f,#f0f,#f00);"></div>
<div style="left:51.699999999999996px;top:181.6px;width:97.2px;height:97.2px;border-radius:50%;background:#808080;"></div>
<div style="left:40px;top:169px;width:122px;height:4px;background:#808080;"></div>
<svg style="left:0px;top:160px;" width="220" height="130" viewBox="0 0 220 130"><defs>
<linearGradient id="tw" gradientUnits="userSpaceOnUse" x1="59.25" y1="253.90" x2="120.82" y2="218.35"><stop offset="0" stop-color="#fff"/><stop offset="1" stop-color="#000"/></linearGradient>
<linearGradient id="tk" gradientUnits="userSpaceOnUse" x1="141.35" y1="253.90" x2="79.78" y2="218.35"><stop offset="0" stop-color="#0000ff"/><stop offset="1" stop-color="#000"/></linearGradient>
</defs>
<g transform="translate(0,-160)">
<g style="isolation:isolate">
<path d="M100.30 182.80 L141.35 253.90 L59.25 253.90 Z" fill="url(#tk)"/>
<path d="M100.30 182.80 L141.35 253.90 L59.25 253.90 Z" fill="url(#tw)" style="mix-blend-mode:plus-lighter"/>
</g>
<circle cx="124.7" cy="243" r="3.8" fill="none" stroke="#202040" stroke-width="2.4"/>
<circle cx="124.7" cy="243" r="3.8" fill="none" stroke="#e8e8f4" stroke-width="1"/>
<path d="M124.4 271.2 L130.8 278.8" stroke="#f0f0f0" stroke-width="1"/>
</g></svg>
<div style="left:1px;top:289px;width:199px;height:10px;background:linear-gradient(90deg,#229cdd,#2238dd 45%,#2222dd 50%,#5a22dd 72%,#9422dc);"></div>
<div style="left:1px;top:300px;width:199px;height:10px;background:linear-gradient(90deg,#37375a,#3a3aa0 40%,#2222dd 50%,#0606f4 62%,#0000ee);"></div>
<div style="left:1px;top:311px;width:199px;height:10px;background:linear-gradient(90deg,#00004c,#0000a4 36%,#2222dd 50%,#6a6af4 72%,#b4b4ff);"></div>
<div style="left:0px;top:299px;width:200px;height:1px;background:#808080;"></div>
<div style="left:0px;top:310px;width:200px;height:1px;background:#808080;"></div>
<div style="left:95px;top:289px;width:10px;height:10px;background:#2323dc;border:1.5px solid #4b4b45;"></div>
<div style="left:95px;top:300px;width:10px;height:10px;background:#2323dc;border:1.5px solid #4b4b45;"></div>
<div style="left:95px;top:311px;width:10px;height:10px;background:#2323dc;border:1.5px solid #4b4b45;"></div>
<div style="left:94px;top:289px;width:1.2px;height:32px;background:#c6c6be;"></div>
<div style="left:104.6px;top:289px;width:1.2px;height:32px;background:#c6c6be;"></div>
<svg style="left:3px;top:326px;" width="13" height="13" viewBox="0 0 13 13"><path d="M1.6 5.8 A5.2 5.2 0 0 1 11 4 M11.4 7.2 A5.2 5.2 0 0 1 2 9" fill="none" stroke="#343434" stroke-width="1.3"/><path d="M12.2 1.4 V5.2 H8.4 Z M0.8 11.6 V7.8 H4.6 Z" fill="#343434"/></svg>
<svg style="left:102px;top:343px;" width="18" height="2" viewBox="0 0 18 2"><rect x="0" y="0" width="2" height="2" fill="#a0a0a0"/><rect x="3" y="0" width="2" height="2" fill="#a0a0a0"/><rect x="6" y="0" width="2" height="2" fill="#a0a0a0"/><rect x="9" y="0" width="2" height="2" fill="#a0a0a0"/><rect x="12" y="0" width="2" height="2" fill="#a0a0a0"/><rect x="15" y="0" width="2" height="2" fill="#a0a0a0"/></svg>
<svg style="left:2px;top:347px;" width="16" height="16" viewBox="0 0 16 16"><circle cx="8" cy="8" r="7.4" fill="none" stroke="#343434" stroke-width="1.1"/><rect x="4" y="8.2" width="7.9" height="3.6" fill="#343434"/><path d="M10.7 8.4 V6.6 A2.6 2.6 0 0 0 5.7 5.6" fill="none" stroke="#343434" stroke-width="1.2"/></svg>
<span class="t" style="left:24.40px;top:348.94px;font-size:10.9px;color:#202020;transform:scaleX(1.1037);">Grid and Guides</span>
<svg style="left:178px;top:348.5px;" width="14" height="13" viewBox="0 0 14 13"><rect x="4.7" y="0.7" width="8.6" height="7.6" fill="#808080" stroke="#343434" stroke-width="1.4"/><rect x="4" y="0" width="10" height="2" fill="#343434"/><rect x="0.7" y="4.7" width="8.6" height="7.6" fill="#808080" stroke="#343434" stroke-width="1.4"/><rect x="0" y="4" width="10" height="2" fill="#343434"/></svg>
<svg style="left:202.3px;top:350px;" width="10" height="10" viewBox="0 0 10 10"><path d="M0.6 0.6 L9.4 9.4 M9.4 0.6 L0.6 9.4" stroke="#343434" stroke-width="1.6"/></svg>
<div style="left:1px;top:388px;width:215px;height:258px;background:#999999;border:1px solid #5e5e5e;box-shadow:inset 0 0 0 1px #b2b2b2;"></div>
<div style="left:49px;top:366px;width:62px;height:23px;background:linear-gradient(#8e8e8e,#888888);border:1px solid #5e5e5e;border-bottom:none;border-radius:4px 4px 0 0;box-shadow:inset 1px 1px 0 #9e9e9e,inset -1px 0 0 #9e9e9e;"></div>
<span class="t" style="left:61.20px;top:370.94px;font-size:10.9px;color:#202020;transform:scaleX(1.0829);">Guides</span>
<div style="left:1px;top:364px;width:49px;height:26px;background:linear-gradient(#a3a3a3,#999999);border:1px solid #5e5e5e;border-bottom:none;border-radius:4px 4px 0 0;box-shadow:inset 1px 1px 0 #b6b6b6,inset -1px 0 0 #b6b6b6;"></div>
<div style="left:2px;top:388px;width:47px;height:3px;background:#999999;border-left:1px solid #b2b2b2;"></div>
<span class="t" style="left:13.60px;top:370.04px;font-size:10.9px;color:#202020;transform:scaleX(1.0878);">Grid</span>
<div style="left:12px;top:402px;width:14px;height:14px;background:linear-gradient(#a0a0a0,#a8a8a8);border:1px solid #626262;border-radius:2px;"></div>
<span class="t" style="left:31.00px;top:402.94px;font-size:10.9px;color:#202020;transform:scaleX(1.1141);">Show grid</span>
<div style="left:112px;top:402px;width:14px;height:14px;background:linear-gradient(#a0a0a0,#a8a8a8);border:1px solid #626262;border-radius:2px;"></div>
<span class="t" style="left:131.00px;top:402.94px;font-size:10.9px;color:#202020;transform:scaleX(1.1313);">Snap to grid</span>
<span class="t" style="left:12.00px;top:430.84px;font-size:10.9px;color:#202020;transform:scaleX(1.1065);">Type:</span>
<div style="left:49px;top:425px;width:156px;height:23px;background:linear-gradient(#adadad,#989898);border:1px solid #5c5c5c;border-radius:3px;box-shadow:inset 0 0 0 1px rgba(255,255,255,.16);"></div>
<span class="t" style="left:54.50px;top:430.84px;font-size:10.9px;color:#1e1e1e;transform:scaleX(1.1205);">Rectangle</span>
<svg style="left:188px;top:434.9px;" width="7.4" height="4.2" viewBox="0 0 7.4 4.2"><path d="M0 0 H7.4 L3.7 4.1 Z" fill="#3a3a3a"/></svg>
<span class="t" style="left:12.00px;top:459.94px;font-size:10.9px;color:#202020;transform:scaleX(1.1101);">X spacing:</span>
<div style="left:85px;top:455px;width:95px;height:21px;background:#aaaaaa;border:1px solid #5e5e5e;border-radius:3px;box-shadow:inset 0 1px 1px rgba(0,0,0,.12);"></div>
<div style="left:165px;top:456px;width:14px;height:19px;background:linear-gradient(#b2b2b2,#9a9a9a);border-left:1px solid #6a6a6a;border-radius:0 3px 3px 0;box-shadow:inset 1px 1px 0 rgba(255,255,255,.14),inset -1px -1px 0 rgba(255,255,255,.14);"></div>
<svg style="left:169.2px;top:459.71px;" width="6.6" height="3.6" viewBox="0 0 6.6 3.6"><path d="M0 3.6 L3.3 0 L6.6 3.6 Z" fill="#444444"/></svg>
<svg style="left:169.2px;top:467.69px;" width="6.6" height="3.6" viewBox="0 0 6.6 3.6"><path d="M0 0 L3.3 3.6 L6.6 0 Z" fill="#444444"/></svg>
<span class="t" style="left:89.00px;top:459.94px;font-size:10.9px;color:#202020;transform:scaleX(1.1251);">20 px</span>
<span class="t" style="left:12.00px;top:488.74px;font-size:10.9px;color:#202020;transform:scaleX(1.1045);">Y spacing:</span>
<div style="left:85px;top:484px;width:95px;height:21px;background:#aaaaaa;border:1px solid #5e5e5e;border-radius:3px;box-shadow:inset 0 1px 1px rgba(0,0,0,.12);"></div>
<div style="left:165px;top:485px;width:14px;height:19px;background:linear-gradient(#b2b2b2,#9a9a9a);border-left:1px solid #6a6a6a;border-radius:0 3px 3px 0;box-shadow:inset 1px 1px 0 rgba(255,255,255,.14),inset -1px -1px 0 rgba(255,255,255,.14);"></div>
<svg style="left:169.2px;top:488.71px;" width="6.6" height="3.6" viewBox="0 0 6.6 3.6"><path d="M0 3.6 L3.3 0 L6.6 3.6 Z" fill="#444444"/></svg>
<svg style="left:169.2px;top:496.69px;" width="6.6" height="3.6" viewBox="0 0 6.6 3.6"><path d="M0 0 L3.3 3.6 L6.6 0 Z" fill="#444444"/></svg>
<span class="t" style="left:89.00px;top:488.74px;font-size:10.9px;color:#202020;transform:scaleX(1.1251);">20 px</span>
<span class="t" style="left:12.00px;top:517.74px;font-size:10.9px;color:#202020;transform:scaleX(1.1229);">Subdivision:</span>
<div style="left:85px;top:513px;width:95px;height:21px;background:#aaaaaa;border:1px solid #5e5e5e;border-radius:3px;box-shadow:inset 0 1px 1px rgba(0,0,0,.12);"></div>
<div style="left:165px;top:514px;width:14px;height:19px;background:linear-gradient(#b2b2b2,#9a9a9a);border-left:1px solid #6a6a6a;border-radius:0 3px 3px 0;box-shadow:inset 1px 1px 0 rgba(255,255,255,.14),inset -1px -1px 0 rgba(255,255,255,.14);"></div>
<svg style="left:169.2px;top:517.71px;" width="6.6" height="3.6" viewBox="0 0 6.6 3.6"><path d="M0 3.6 L3.3 0 L6.6 3.6 Z" fill="#444444"/></svg>
<svg style="left:169.2px;top:525.69px;" width="6.6" height="3.6" viewBox="0 0 6.6 3.6"><path d="M0 0 L3.3 3.6 L6.6 0 Z" fill="#444444"/></svg>
<span class="t" style="left:89.00px;top:517.74px;font-size:10.9px;color:#202020;transform:scaleX(1.0722);">2</span>
<svg style="left:191px;top:471px;" width="9" height="19" viewBox="0 0 9 19"><rect x="1.2" y="0.8" width="6.6" height="7.6" rx="2" fill="none" stroke="#343434" stroke-width="1.3"/><rect x="1.2" y="10.6" width="6.6" height="7.6" rx="2" fill="none" stroke="#343434" stroke-width="1.3"/><path d="M4.5 5.6 V13.4" stroke="#343434" stroke-width="1.6"/></svg>
<span class="t" style="left:12.00px;top:546.74px;font-size:10.9px;color:#202020;transform:scaleX(1.1221);">Main Style:</span>
<div style="left:80px;top:541px;width:70px;height:23px;background:linear-gradient(#adadad,#989898);border:1px solid #5c5c5c;border-radius:3px;box-shadow:inset 0 0 0 1px rgba(255,255,255,.16);"></div>
<span class="t" style="left:85.50px;top:546.74px;font-size:10.9px;color:#1e1e1e;transform:scaleX(1.0913);">Dashed</span>
<svg style="left:134px;top:550.9px;" width="7.4" height="4.2" viewBox="0 0 7.4 4.2"><path d="M0 0 H7.4 L3.7 4.1 Z" fill="#3a3a3a"/></svg>
<div style="left:156px;top:541px;width:50px;height:23px;background:linear-gradient(#b1b1b1,#a3a3a3);border:1px solid #6b6b6b;border-radius:3px;"></div>
<div style="left:160px;top:545px;width:41px;height:15px;background:#000;"></div>
<span class="t" style="left:12.00px;top:575.74px;font-size:10.9px;color:#202020;transform:scaleX(1.1296);">Div Style:</span>
<div style="left:80px;top:570px;width:70px;height:23px;background:linear-gradient(#adadad,#989898);border:1px solid #5c5c5c;border-radius:3px;box-shadow:inset 0 0 0 1px rgba(255,255,255,.16);"></div>
<span class="t" style="left:85.50px;top:575.74px;font-size:10.9px;color:#1e1e1e;transform:scaleX(1.0745);">Lines</span>
<svg style="left:134px;top:579.9px;" width="7.4" height="4.2" viewBox="0 0 7.4 4.2"><path d="M0 0 H7.4 L3.7 4.1 Z" fill="#3a3a3a"/></svg>
<div style="left:156px;top:570px;width:50px;height:23px;background:linear-gradient(#b1b1b1,#a3a3a3);border:1px solid #6b6b6b;border-radius:3px;"></div>
<div style="left:160px;top:574px;width:41px;height:15px;background:#000;"></div>
<div style="left:12px;top:603px;width:14px;height:14px;background:linear-gradient(#a0a0a0,#a8a8a8);border:1px solid #626262;border-radius:2px;"></div>
<span class="t" style="left:31.00px;top:603.74px;font-size:10.9px;color:#202020;transform:scaleX(1.1353);">Grid Offset</span>
<svg style="left:218px;top:383px;" width="2" height="18" viewBox="0 0 2 18"><rect x="0" y="0" width="2" height="2" fill="#a8a8a8"/><rect x="0" y="3" width="2" height="2" fill="#a8a8a8"/><rect x="0" y="6" width="2" height="2" fill="#a8a8a8"/><rect x="0" y="9" width="2" height="2" fill="#a8a8a8"/><rect x="0" y="12" width="2" height="2" fill="#a8a8a8"/><rect x="0" y="15" width="2" height="2" fill="#a8a8a8"/></svg>
<div style="left:223px;top:129px;width:1056px;height:31px;background:linear-gradient(#898989,#838383 60%,#808080);border:1px solid #676767;border-bottom:none;border-radius:4px 4px 0 0;box-shadow:inset 1px 1px 0 #9a9a9a,inset -1px 0 0 #9a9a9a;"></div>
<div style="left:222px;top:152px;width:1057px;height:8px;background:linear-gradient(rgba(128,128,128,0),#808080 85%);"></div>
<div style="left:236.65px;top:137.75px;width:12.5px;height:12.5px;border-radius:50%;background:radial-gradient(circle at 48% 52%,rgba(235,235,255,.8) 0,rgba(235,235,255,.45) 30%,rgba(255,255,255,0) 64%),conic-gradient(from 0deg,#ff30e0,#ff5ca8 45deg,#ffc848 100deg,#c0ff48 135deg,#40ffb8 180deg,#30dcff 225deg,#4888ff 270deg,#b048ff 318deg,#ff30e0);"></div>
<svg style="left:233.9px;top:135px;" width="18" height="18" viewBox="0 0 18 18"><path d="M1.70 3.00 L12.40 11.90" stroke="#2a2a30" stroke-width="1.9" stroke-linecap="round"/><circle cx="10.80" cy="10.60" r="0.9" fill="#b8b8c0"/><ellipse cx="12.40" cy="11.90" rx="1.5" ry="1.1" transform="rotate(40 12.40 11.90)" fill="#18181c"/></svg>
<span class="t" style="left:708.60px;top:138.56px;font-size:12.2px;color:#202020;transform:scaleX(1.1138);">[Not Saved]</span>
<span class="t" style="left:787.40px;top:138.56px;font-size:12.2px;color:#202020;transform:scaleX(1.2638);">*</span>
<svg style="left:1251.1px;top:141.3px;" width="10.8" height="10.8" viewBox="0 0 10.8 10.8"><path d="M0.6 0.6 L10.200000000000001 10.200000000000001 M10.200000000000001 0.6 L0.6 10.200000000000001" stroke="#343434" stroke-width="1.6"/></svg>
<div style="left:345px;top:188px;width:514px;height:446px;background:#7a7a7a;"></div>
<div style="left:346px;top:189px;width:512px;height:445px;background:#fff;"></div>
<svg style="left:346px;top:189px;" width="512" height="445" viewBox="0 0 512 445"><g transform="translate(-346,-189)"><path d="M545.5 328.7 L725.5 403.3 L650.8 583 L471.1 508.6 Z" fill="#5259e2"/><rect x="669" y="583" width="2" height="2" fill="#000"/></g></svg>
<div style="left:1265px;top:160px;width:1px;height:474px;background:#686868;"></div>
<div style="left:1266px;top:160px;width:13px;height:474px;background:#8c8c8c;"></div>
<div style="left:1266px;top:160px;width:13px;height:1px;background:#686868;"></div>
<div style="left:1266px;top:161px;width:13px;height:13px;background:linear-gradient(90deg,#9a9a9a,#929292);border:1px solid #a6a6a6;"></div>
<div style="left:1266px;top:174px;width:13px;height:1px;background:#686868;"></div>
<svg style="left:1269px;top:165.5px;" width="7" height="4" viewBox="0 0 7 4"><path d="M0 4 L3.5 0 L7 4 Z" fill="#3c3c3c"/></svg>
<div style="left:1266px;top:304px;width:13px;height:1px;background:#686868;"></div>
<div style="left:1266px;top:305px;width:13px;height:154px;background:linear-gradient(90deg,#a0a0a0,#959595);border:1px solid #acacac;"></div>
<div style="left:1266px;top:459px;width:13px;height:1px;background:#686868;"></div>
<div style="left:1266px;top:620px;width:13px;height:1px;background:#686868;"></div>
<div style="left:1266px;top:621px;width:13px;height:13px;background:linear-gradient(90deg,#9a9a9a,#929292);border:1px solid #a6a6a6;"></div>
<svg style="left:1269px;top:626px;" width="7" height="4" viewBox="0 0 7 4"><path d="M0 0 L3.5 4 L7 0 Z" fill="#3c3c3c"/></svg>
<div style="left:223px;top:634px;width:1056px;height:1px;background:#686868;"></div>
<div style="left:223px;top:635px;width:1042px;height:13px;background:#8c8c8c;"></div>
<div style="left:223px;top:635px;width:13px;height:13px;background:linear-gradient(#9a9a9a,#929292);border:1px solid #a6a6a6;"></div>
<div style="left:236px;top:635px;width:1px;height:13px;background:#686868;"></div>
<svg style="left:227px;top:637.5px;" width="4" height="7" viewBox="0 0 4 7"><path d="M4 0 L0 3.5 L4 7 Z" fill="#3c3c3c"/></svg>
<div style="left:582px;top:635px;width:1px;height:13px;background:#686868;"></div>
<div style="left:583px;top:635px;width:442px;height:13px;background:linear-gradient(#a0a0a0,#959595);border:1px solid #acacac;"></div>
<div style="left:1025px;top:635px;width:1px;height:13px;background:#686868;"></div>
<div style="left:1251px;top:635px;width:1px;height:13px;background:#686868;"></div>
<div style="left:1252px;top:635px;width:13px;height:13px;background:linear-gradient(#9a9a9a,#929292);border:1px solid #a6a6a6;"></div>
<svg style="left:1257px;top:638px;" width="4" height="7" viewBox="0 0 4 7"><path d="M0 0 L4 3.5 L0 7 Z" fill="#3c3c3c"/></svg>
<svg style="left:633px;top:651px;" width="18" height="2" viewBox="0 0 18 2"><rect x="0" y="0" width="2" height="2" fill="#a0a0a0"/><rect x="3" y="0" width="2" height="2" fill="#a0a0a0"/><rect x="6" y="0" width="2" height="2" fill="#a0a0a0"/><rect x="9" y="0" width="2" height="2" fill="#a0a0a0"/><rect x="12" y="0" width="2" height="2" fill="#a0a0a0"/><rect x="15" y="0" width="2" height="2" fill="#a0a0a0"/></svg>
<span class="t" style="left:889.30px;top:265.94px;font-size:10.9px;color:#202020;transform:scaleX(1.1003);">Layers</span>
<svg style="left:1193.6px;top:265.8px;" width="14" height="13" viewBox="0 0 14 13"><rect x="4.7" y="0.7" width="8.6" height="7.6" fill="#808080" stroke="#343434" stroke-width="1.4"/><rect x="4" y="0" width="10" height="2" fill="#343434"/><rect x="0.7" y="4.7" width="8.6" height="7.6" fill="#808080" stroke="#343434" stroke-width="1.4"/><rect x="0" y="4" width="10" height="2" fill="#343434"/></svg>
<svg style="left:1217.6px;top:267px;" width="10.5" height="10.5" viewBox="0 0 10.5 10.5"><path d="M0.6 0.6 L9.9 9.9 M9.9 0.6 L0.6 9.9" stroke="#343434" stroke-width="1.6"/></svg>
<div style="left:888px;top:282px;width:311px;height:31px;background:linear-gradient(#a7a7a7,#939393);border:1px solid #5c5c5c;border-radius:3px;box-shadow:inset 0 0 0 1px rgba(255,255,255,.16);"></div>
<span class="t" style="left:893.50px;top:290.94px;font-size:10.9px;color:#4e4e4e;transform:scaleX(1.1244);">Normal</span>
<svg style="left:1184px;top:295.9px;" width="7.4" height="4.2" viewBox="0 0 7.4 4.2"><path d="M0 0 H7.4 L3.7 4.1 Z" fill="#5a5a5a"/></svg>
<svg style="left:1208px;top:288px;" width="20" height="24" viewBox="0 0 20 24"><path d="M1 0.8 H14.4 L9.6 9.6 V17.6 L6.4 15.6 V9.6 Z" fill="none" stroke="#343434" stroke-width="1.5" stroke-linejoin="round"/><path d="M16 19 H21 L18.5 22 Z" fill="#343434"/></svg>
<div style="left:888px;top:316px;width:311px;height:29px;background:#a0a0a0;border:1px solid #5f5f5f;border-radius:3px;"></div>
<div style="left:889px;top:317px;width:165px;height:27px;background:#787878;border-radius:2px 0 0 2px;"></div>
<div style="left:1184px;top:317px;width:14px;height:27px;background:linear-gradient(#b2b2b2,#9a9a9a);border-left:1px solid #6a6a6a;border-radius:0 3px 3px 0;box-shadow:inset 1px 1px 0 rgba(255,255,255,.14),inset -1px -1px 0 rgba(255,255,255,.14);"></div>
<svg style="left:1187.8px;top:322.83px;" width="7.4" height="4" viewBox="0 0 7.4 4"><path d="M0 4 L3.7 0 L7.4 4 Z" fill="#707070"/></svg>
<svg style="left:1187.8px;top:334.17px;" width="7.4" height="4" viewBox="0 0 7.4 4"><path d="M0 0 L3.7 4 L7.4 0 Z" fill="#707070"/></svg>
<span class="t" style="left:998.00px;top:323.94px;font-size:10.9px;color:#4e4e4e;transform:scaleX(1.1274);">Opacity:  56%</span>
<svg style="left:1208px;top:324px;" width="20" height="22" viewBox="0 0 20 22"><path d="M1 2 H14 M1 6.4 H14 M1 10.8 H14" stroke="#343434" stroke-width="1.9"/><path d="M16 16 H21 L18.5 19 Z" fill="#343434"/></svg>
<div style="left:888px;top:347px;width:344px;height:193px;background:#aaaaaa;border:1px solid #5e5e5e;"></div>
<div style="left:889px;top:403px;width:342px;height:1px;background:#6c6c6c;"></div>
<div style="left:911px;top:404px;width:320px;height:55px;background:#2a5b92;"></div>
<div style="left:889px;top:459px;width:342px;height:1px;background:#6c6c6c;"></div>
<div style="left:889px;top:515px;width:342px;height:1px;background:#6c6c6c;"></div>
<svg style="left:893px;top:369px;" width="14" height="13" viewBox="0 0 14 13"><path d="M0.4 7.2 C2.6 2.4 11.4 2.4 13.6 7.2" fill="none" stroke="#343434" stroke-width="1.5"/><circle cx="7" cy="5.6" r="3.3" fill="#343434"/><circle cx="5.8" cy="4.4" r="0.9" fill="#bbb" opacity=".55"/><path d="M0.8 8.2 C3 13.4 11 13.4 13.2 8.2" fill="none" stroke="#343434" stroke-width="0.9"/></svg>
<svg style="left:893px;top:425px;" width="14" height="13" viewBox="0 0 14 13"><path d="M0.4 7.2 C2.6 2.4 11.4 2.4 13.6 7.2" fill="none" stroke="#343434" stroke-width="1.5"/><circle cx="7" cy="5.6" r="3.3" fill="#343434"/><circle cx="5.8" cy="4.4" r="0.9" fill="#bbb" opacity=".55"/><path d="M0.8 8.2 C3 13.4 11 13.4 13.2 8.2" fill="none" stroke="#343434" stroke-width="0.9"/></svg>
<svg style="left:893px;top:481px;" width="14" height="13" viewBox="0 0 14 13"><path d="M0.4 7.2 C2.6 2.4 11.4 2.4 13.6 7.2" fill="none" stroke="#343434" stroke-width="1.5"/><circle cx="7" cy="5.6" r="3.3" fill="#343434"/><circle cx="5.8" cy="4.4" r="0.9" fill="#bbb" opacity=".55"/><path d="M0.8 8.2 C3 13.4 11 13.4 13.2 8.2" fill="none" stroke="#343434" stroke-width="0.9"/></svg>
<svg style="left:914px;top:354px;" width="51" height="44" viewBox="0 0 51 44"><defs><clipPath id="thc"><rect x="1" y="1" width="49" height="42"/></clipPath></defs><rect width="51" height="44" fill="#e6e6e6"/><g clip-path="url(#thc)"><rect x="1" y="1" width="8" height="8" fill="#c9c9c9"/><rect x="17" y="1" width="8" height="8" fill="#c9c9c9"/><rect x="33" y="1" width="8" height="8" fill="#c9c9c9"/><rect x="49" y="1" width="8" height="8" fill="#c9c9c9"/><rect x="9" y="9" width="8" height="8" fill="#c9c9c9"/><rect x="25" y="9" width="8" height="8" fill="#c9c9c9"/><rect x="41" y="9" width="8" height="8" fill="#c9c9c9"/><rect x="1" y="17" width="8" height="8" fill="#c9c9c9"/><rect x="17" y="17" width="8" height="8" fill="#c9c9c9"/><rect x="33" y="17" width="8" height="8" fill="#c9c9c9"/><rect x="49" y="17" width="8" height="8" fill="#c9c9c9"/><rect x="9" y="25" width="8" height="8" fill="#c9c9c9"/><rect x="25" y="25" width="8" height="8" fill="#c9c9c9"/><rect x="41" y="25" width="8" height="8" fill="#c9c9c9"/><rect x="1" y="33" width="8" height="8" fill="#c9c9c9"/><rect x="17" y="33" width="8" height="8" fill="#c9c9c9"/><rect x="33" y="33" width="8" height="8" fill="#c9c9c9"/><rect x="49" y="33" width="8" height="8" fill="#c9c9c9"/><rect x="9" y="41" width="8" height="8" fill="#c9c9c9"/><rect x="25" y="41" width="8" height="8" fill="#c9c9c9"/><rect x="41" y="41" width="8" height="8" fill="#c9c9c9"/></g><rect x="0.5" y="0.5" width="50" height="43" fill="none" stroke="#5e5e5e"/><rect x="7" y="2.9" width="37.8" height="36" fill="#2228dd"/></svg>
<svg style="left:971px;top:350px;" width="11" height="10" viewBox="0 0 11 10"><path d="M2.6 0.5 H9.7 V7.5 L7.6 9.5 H2.6 V6.4" fill="none" stroke="#343434" stroke-width="1"/><path d="M0.3 2 L6.6 7.6 M6.7 4.8 V7.7 H3.8" fill="none" stroke="#343434" stroke-width="1"/></svg>
<svg style="left:971px;top:393px;" width="11" height="7" viewBox="0 0 11 7"><path d="M0.8 0.8 L5.5 5.6 L10.2 0.8" fill="none" stroke="#343434" stroke-width="1.5"/></svg>
<span class="t" style="left:994.40px;top:369.94px;font-size:10.9px;color:#202020;transform:scaleX(1.1069);">Paint Layer 1</span>
<svg style="left:1159px;top:370.6px;" width="8" height="12" viewBox="0 0 8 12"><path d="M4 0.3 A3.7 3.7 0 0 1 6.4 6.9 L5.8 9.2 H2.2 L1.6 6.9 A3.7 3.7 0 0 1 4 0.3 Z" fill="#7f7f7f"/><path d="M2.6 10 H5.4 L4.8 11.4 H3.2 Z" fill="#7f7f7f"/></svg>
<svg style="left:1176.6px;top:368.4px;" width="13" height="14" viewBox="0 0 13 14"><rect x="0.6" y="6.3" width="12" height="7.3" fill="#7f7f7f"/><path d="M6.4 0.9 C9.6 1 11.6 3 11.8 6.6" fill="none" stroke="#7f7f7f" stroke-width="1.5"/></svg>
<svg style="left:1194.2px;top:369.8px;" width="14" height="13" viewBox="0 0 14 13"><path d="M12.2 1.2 C11 5.4 8.8 11 5.2 11 C2.4 11 0.9 8.8 0.9 6.2 C0.9 3.2 2.7 1 5.3 1 C8.4 1 9.7 5.4 10.5 8.6 C10.9 10.2 11.6 11 12.9 10.7" fill="none" stroke="#7f7f7f" stroke-width="1.5"/></svg>
<svg style="left:1212.5px;top:368.5px;" width="15" height="15" viewBox="0 0 15 15"><rect x="0" y="0" width="5" height="5" fill="#9a9a9a"/><rect x="5" y="0" width="5" height="5" fill="#bdbdbd"/><rect x="10" y="0" width="5" height="5" fill="#9a9a9a"/><rect x="0" y="5" width="5" height="5" fill="#bdbdbd"/><rect x="5" y="5" width="5" height="5" fill="#9a9a9a"/><rect x="10" y="5" width="5" height="5" fill="#bdbdbd"/><rect x="0" y="10" width="5" height="5" fill="#9a9a9a"/><rect x="5" y="10" width="5" height="5" fill="#bdbdbd"/><rect x="10" y="10" width="5" height="5" fill="#9a9a9a"/></svg>
<svg style="left:1020.4px;top:406px;" width="8.6" height="10" viewBox="0 0 8.6 10"><path d="M1.6 0.6 H7 M1.6 9.4 H7 M0.6 1.6 V8.4 M8 1.6 V8.4" fill="none" stroke="#3a3a3a" stroke-width="1.1"/><path d="M0.4 0.4 L2.4 2.4 M8.2 0.4 L6.2 2.4 M0.4 9.6 L2.4 7.6 M8.2 9.6 L6.2 7.6" stroke="#3a3a3a" stroke-width="1.2"/></svg>
<svg style="left:1019px;top:448px;" width="12" height="9.6" viewBox="0 0 12 9.6"><rect x="0.8" y="0.8" width="10.4" height="8" fill="none" stroke="#3a3a3a" stroke-width="1.6"/><path d="M4.8 2.8 L7.8 4.8 L4.8 6.8 Z" fill="#3a3a3a"/></svg>
<svg style="left:935px;top:428px;" width="9" height="9" viewBox="0 0 9 9"><path d="M0.5 0.3 V8.2 H8.8" fill="none" stroke="#8c8274" stroke-width="1"/></svg>
<div style="left:987px;top:431px;width:2px;height:2px;background:#8c8274;"></div>
<span class="t" style="left:1044.20px;top:425.94px;font-size:10.9px;color:#161a24;font-weight:bold;transform:scaleX(1.1911);">Transform Mask 1</span>
<svg style="left:1176.6px;top:424.4px;" width="13" height="14" viewBox="0 0 13 14"><rect x="0.6" y="6.3" width="12" height="7.3" fill="#2a4c7c"/><path d="M6.4 0.9 C9.6 1 11.6 3 11.8 6.6" fill="none" stroke="#2a4c7c" stroke-width="1.5"/></svg>
<div style="left:914px;top:463px;width:51px;height:51px;background:#fff;border:1px solid #5e5e5e;"></div>
<svg style="left:971px;top:462px;" width="11" height="10" viewBox="0 0 11 10"><path d="M2.6 0.5 H9.7 V7.5 L7.6 9.5 H2.6 V6.4" fill="none" stroke="#343434" stroke-width="1"/><path d="M0.3 2 L6.6 7.6 M6.7 4.8 V7.7 H3.8" fill="none" stroke="#343434" stroke-width="1"/></svg>
<span class="t" style="left:994.40px;top:481.94px;font-size:10.9px;color:#202020;transform:scaleX(1.1259);">Background</span>
<svg style="left:1176.6px;top:480px;" width="13" height="14" viewBox="0 0 13 14"><rect x="0.6" y="6.3" width="12" height="7.3" fill="#2e2e2e"/><path d="M2.9 6.6 V4.8 A3.6 3.6 0 0 1 10.3 4.8 V6.6" fill="none" stroke="#2e2e2e" stroke-width="1.9"/></svg>
<svg style="left:1194.2px;top:481.8px;" width="14" height="13" viewBox="0 0 14 13"><path d="M12.2 1.2 C11 5.4 8.8 11 5.2 11 C2.4 11 0.9 8.8 0.9 6.2 C0.9 3.2 2.7 1 5.3 1 C8.4 1 9.7 5.4 10.5 8.6 C10.9 10.2 11.6 11 12.9 10.7" fill="none" stroke="#7f7f7f" stroke-width="1.5"/></svg>
<svg style="left:1212.5px;top:480.5px;" width="15" height="15" viewBox="0 0 15 15"><rect x="0" y="0" width="5" height="5" fill="#9a9a9a"/><rect x="5" y="0" width="5" height="5" fill="#bdbdbd"/><rect x="10" y="0" width="5" height="5" fill="#9a9a9a"/><rect x="0" y="5" width="5" height="5" fill="#bdbdbd"/><rect x="5" y="5" width="5" height="5" fill="#9a9a9a"/><rect x="10" y="5" width="5" height="5" fill="#bdbdbd"/><rect x="0" y="10" width="5" height="5" fill="#9a9a9a"/><rect x="5" y="10" width="5" height="5" fill="#bdbdbd"/><rect x="10" y="10" width="5" height="5" fill="#9a9a9a"/></svg>
<svg style="left:893px;top:546px;" width="19" height="19" viewBox="0 0 19 19"><path d="M9.5 0.6 V18.4 M0.6 9.5 H18.4" stroke="#343434" stroke-width="1.9"/></svg>
<svg style="left:920px;top:553px;" width="7" height="4" viewBox="0 0 7 4"><path d="M0 0 H7 L3.5 4 Z" fill="#343434"/></svg>
<svg style="left:936.6px;top:546px;" width="21" height="19" viewBox="0 0 21 19"><path d="M6.4 0.9 H19.6 V13.2 H6.4 Z" fill="none" stroke="#343434" stroke-width="1.7"/><path d="M3.4 5 H0.9 V18 H14.4 V15.6" fill="none" stroke="#343434" stroke-width="1.7"/></svg>
<svg style="left:969px;top:550px;" width="20" height="11" viewBox="0 0 20 11"><path d="M0.8 0.8 L10 9.6 L19.2 0.8" fill="none" stroke="#343434" stroke-width="1.9"/></svg>
<svg style="left:1001px;top:550px;" width="20" height="11" viewBox="0 0 20 11"><path d="M0.8 10.2 L10 1.4 L19.2 10.2" fill="none" stroke="#343434" stroke-width="1.9"/></svg>
<svg style="left:1033px;top:546px;" width="20" height="19" viewBox="0 0 20 19"><path d="M0.5 3.8 H19.5 M0.5 9.7 H19.5 M0.5 15.6 H19.5" stroke="#343434" stroke-width="2.1"/><circle cx="15" cy="3.8" r="1.9" fill="#343434"/><circle cx="5.4" cy="9.7" r="1.9" fill="#343434"/><circle cx="11" cy="15.6" r="1.9" fill="#343434"/></svg>
<svg style="left:1060px;top:553px;" width="7" height="4" viewBox="0 0 7 4"><path d="M0 0 H7 L3.5 4 Z" fill="#343434"/></svg>
<svg style="left:1208.5px;top:545px;" width="17" height="20" viewBox="0 0 17 20"><path d="M5.6 0.6 H11.4 V2.2 H5.6 Z M0.6 2.6 H16.4 V5 H0.6 Z" fill="#343434"/><path d="M2 6.4 H15 V17.6 Q15 19.4 13.2 19.4 H3.8 Q2 19.4 2 17.6 Z" fill="#343434"/></svg>
<div style="left:0px;top:678px;width:1279px;height:1px;background:#6c6c6c;"></div>
<div style="left:0px;top:679px;width:1279px;height:1px;background:#979797;"></div>
<div style="left:1px;top:657px;width:122px;height:21px;background:linear-gradient(#7b7b7b,#767676);border:1px solid #6c6c6c;border-bottom:none;border-radius:4px 4px 0 0;box-shadow:inset 1px 1px 0 #8f8f8f,inset -1px 0 0 #8f8f8f;"></div>
<span class="t" style="left:12.20px;top:661.94px;font-size:10.9px;color:#202020;transform:scaleX(1.1276);">Animation Curves</span>
<div style="left:122px;top:654px;width:131px;height:26px;background:linear-gradient(#8a8a8a,#828282 60%,#808080);border:1px solid #6c6c6c;border-bottom:none;border-radius:4px 4px 0 0;box-shadow:inset 1px 1px 0 #999,inset -1px 0 0 #999;"></div>
<span class="t" style="left:133.80px;top:660.94px;font-size:10.9px;color:#202020;transform:scaleX(1.1587);">Animation Timeline</span>
<span class="t" style="left:9.20px;top:689.94px;font-size:10.9px;color:#202020;transform:scaleX(1.1489);">Animation Timeline</span>
<svg style="left:155.8px;top:687.2px;" width="14.4" height="15.6" viewBox="0 0 14.4 15.6"><rect x="0" y="0" width="2.3" height="15.6" fill="#343434"/><rect x="12.1" y="0" width="2.3" height="15.6" fill="#343434"/><path d="M10.8 0.2 V15.4 L3.2 7.8 Z" fill="#343434"/></svg>
<svg style="left:188px;top:687.2px;" width="11.2" height="15.6" viewBox="0 0 11.2 15.6"><rect x="9" y="0" width="2.1" height="15.6" fill="#343434"/><path d="M8 0.2 V15.4 L0 7.8 Z" fill="#343434"/></svg>
<div style="left:217px;top:689px;width:12px;height:12px;background:#343434;"></div>
<svg style="left:249px;top:687.2px;" width="8.2" height="15.6" viewBox="0 0 8.2 15.6"><path d="M0 0.2 V15.4 L8.2 7.8 Z" fill="#343434"/></svg>
<svg style="left:277.6px;top:687.2px;" width="11.2" height="15.6" viewBox="0 0 11.2 15.6"><rect x="0" y="0" width="2.1" height="15.6" fill="#343434"/><path d="M3.2 0.2 V15.4 L11.2 7.8 Z" fill="#343434"/></svg>
<svg style="left:305.6px;top:687.2px;" width="14.4" height="15.6" viewBox="0 0 14.4 15.6"><rect x="0" y="0" width="2.3" height="15.6" fill="#343434"/><rect x="12.1" y="0" width="2.3" height="15.6" fill="#343434"/><path d="M3.6 0.2 V15.4 L11.2 7.8 Z" fill="#343434"/></svg>
<div style="left:344px;top:685px;width:75px;height:21px;background:#aaaaaa;border:1px solid #666;border-radius:3px;box-shadow:inset 0 1px 1px rgba(0,0,0,.15);"></div>
<div style="left:405px;top:686px;width:13px;height:19px;background:linear-gradient(#b2b2b2,#9a9a9a);border-left:1px solid #6a6a6a;border-radius:0 3px 3px 0;box-shadow:inset 1px 1px 0 rgba(255,255,255,.14),inset -1px -1px 0 rgba(255,255,255,.14);"></div>
<svg style="left:408.7px;top:689.71px;" width="6.6" height="3.6" viewBox="0 0 6.6 3.6"><path d="M0 3.6 L3.3 0 L6.6 3.6 Z" fill="#444444"/></svg>
<svg style="left:408.7px;top:697.69px;" width="6.6" height="3.6" viewBox="0 0 6.6 3.6"><path d="M0 0 L3.3 3.6 L6.6 0 Z" fill="#444444"/></svg>
<span class="t" style="left:348.00px;top:689.94px;font-size:10.9px;color:#202020;transform:scaleX(1.2651);">#  3</span>
<svg style="left:442px;top:687.8px;" width="18" height="12.8" viewBox="0 0 18 12.8"><rect x="0.65" y="0.65" width="16.7" height="11.5" fill="#808080" stroke="#343434" stroke-width="1.3"/><path d="M3.8 0.6 V12.200000000000001 M14.2 0.6 V12.200000000000001" stroke="#343434" stroke-width="1"/><path d="M2.2 1.4 V11.8 M15.8 1.4 V11.8" stroke="#343434" stroke-width="1.3" stroke-dasharray="1.5 1.5"/><path d="M7.4 3.6 L11.4 6.4 L7.4 9.2 Z" fill="#343434"/><path d="M12.4 0.6 H16 M2 12.2 H5.6" stroke="#808080" stroke-width="1.8"/><path d="M13 1.4 L15.6 -2 M5 11.6 L2.4 15" stroke="#343434" stroke-width="1.3"/></svg>
<div style="left:466px;top:685px;width:108px;height:21px;background:#aaaaaa;border:1px solid #5f5f5f;border-radius:3px;"></div>
<div style="left:467px;top:686px;width:39px;height:19px;background:#2a5b92;border-radius:2px 0 0 2px;"></div>
<div style="left:559px;top:686px;width:14px;height:19px;background:linear-gradient(#b2b2b2,#9a9a9a);border-left:1px solid #6a6a6a;border-radius:0 3px 3px 0;box-shadow:inset 1px 1px 0 rgba(255,255,255,.14),inset -1px -1px 0 rgba(255,255,255,.14);"></div>
<svg style="left:563.2px;top:689.71px;" width="6.6" height="3.6" viewBox="0 0 6.6 3.6"><path d="M0 3.6 L3.3 0 L6.6 3.6 Z" fill="#444444"/></svg>
<svg style="left:563.2px;top:697.69px;" width="6.6" height="3.6" viewBox="0 0 6.6 3.6"><path d="M0 0 L3.3 3.6 L6.6 0 Z" fill="#444444"/></svg>
<span class="t" style="left:475.00px;top:689.94px;font-size:10.9px;color:#242424;transform:scaleX(1.1025);">Speed: 100 %</span>
<div style="left:467px;top:686px;width:39px;height:19px;overflow:hidden;"><span class="t" style="left:8px;top:3.94px;font-size:10.9px;color:#c4c9d2;transform:scaleX(1.1025);">Speed: 100 %</span></div>
<svg style="left:596px;top:687.8px;" width="18.4" height="12.8" viewBox="0 0 18.4 12.8"><rect x="0.65" y="0.65" width="17.099999999999998" height="11.5" fill="#808080" stroke="#747474" stroke-width="1.1"/><path d="M3.8 0.6 V12.200000000000001 M14.599999999999998 0.6 V12.200000000000001" stroke="#747474" stroke-width="1"/><path d="M2.2 1.4 V11.8 M16.2 1.4 V11.8" stroke="#747474" stroke-width="1.3" stroke-dasharray="1.5 1.5"/></svg>
<svg style="left:628.4px;top:686.8px;" width="16.4" height="10.6" viewBox="0 0 16.4 10.6"><rect x="0.65" y="0.65" width="15.099999999999998" height="9.299999999999999" fill="#808080" stroke="#747474" stroke-width="1.1"/><path d="M3.8 0.6 V10.0 M12.599999999999998 0.6 V10.0" stroke="#747474" stroke-width="1"/><path d="M2.2 1.4 V9.6 M14.2 1.4 V9.6" stroke="#747474" stroke-width="1.3" stroke-dasharray="1.5 1.5"/></svg>
<svg style="left:625.2px;top:690.7px;" width="15.8" height="10.8" viewBox="0 0 15.8 10.8"><rect x="0.65" y="0.65" width="14.5" height="9.5" fill="#808080" stroke="#747474" stroke-width="1.1"/><path d="M3.8 0.6 V10.200000000000001 M12.0 0.6 V10.200000000000001" stroke="#747474" stroke-width="1"/><path d="M2.2 1.4 V9.8 M13.600000000000001 1.4 V9.8" stroke="#747474" stroke-width="1.3" stroke-dasharray="1.5 1.5"/></svg>
<svg style="left:656px;top:687.8px;" width="18" height="12.8" viewBox="0 0 18 12.8"><rect x="0.65" y="0.65" width="16.7" height="11.5" fill="#808080" stroke="#343434" stroke-width="1.3"/><path d="M3.8 0.6 V12.200000000000001 M14.2 0.6 V12.200000000000001" stroke="#343434" stroke-width="1"/><path d="M2.2 1.4 V11.8 M15.8 1.4 V11.8" stroke="#343434" stroke-width="1.3" stroke-dasharray="1.5 1.5"/><path d="M3.6 14.4 L15.6 -2" stroke="#343434" stroke-width="1.6"/></svg>
<svg style="left:1127.7px;top:685.2px;" width="19" height="20" viewBox="0 0 19 20"><path d="M9.8 0 C7 5 0 8 0 13 C0 17 4 19.7 8.5 19.7 C14 19.7 18.9 17 18.9 12 C18.9 8 12 5 9.8 0 Z" fill="#343434"/><path d="M7.4 3 C3.4 8 2.6 14 7 19.6 M9.9 0.6 C8.4 8 10 15 14.8 19.2 M11.4 2.6 C11.4 9 14 13 19.2 16.4" fill="none" stroke="#808080" stroke-width="1.15"/></svg>
<svg style="left:1157px;top:686px;" width="24" height="22" viewBox="0 0 24 22"><path d="M1 2.5 H19 M1 8.5 H19 M1 14.5 H19" stroke="#343434" stroke-width="3"/><path d="M16.9 17.3 H23 L19.95 20.3 Z" fill="#343434"/></svg>
<svg style="left:1221px;top:690px;" width="14" height="13" viewBox="0 0 14 13"><rect x="4.7" y="0.7" width="8.6" height="7.6" fill="#808080" stroke="#343434" stroke-width="1.4"/><rect x="4" y="0" width="10" height="2" fill="#343434"/><rect x="0.7" y="4.7" width="8.6" height="7.6" fill="#808080" stroke="#343434" stroke-width="1.4"/><rect x="0" y="4" width="10" height="2" fill="#343434"/></svg>
<svg style="left:1251.4px;top:691px;" width="10.5" height="10.5" viewBox="0 0 10.5 10.5"><path d="M0.6 0.6 L9.9 9.9 M9.9 0.6 L0.6 9.9" stroke="#343434" stroke-width="1.6"/></svg>
<div style="left:0px;top:712px;width:1279px;height:1px;background:#6c6c6c;"></div>
<div style="left:0px;top:713px;width:208px;height:21px;background:#8c8c8c;border-top:1px solid #a4a4a4;border-left:1px solid #a0a0a0;border-bottom:1px solid #6a6a6a;"></div>
<svg style="left:7px;top:719px;" width="12" height="12" viewBox="0 0 12 12"><path d="M5 0.6 V10.6 M0.4 5.6 H10.6" stroke="#343434" stroke-width="1.5"/><path d="M7.4 9 H11.6 L9.5 11.6 Z" fill="#343434"/></svg>
<svg style="left:27px;top:719px;" width="13" height="12" viewBox="0 0 13 12"><path d="M0.6 3.8 H3.4 L7.4 0.4 V10.6 L3.4 7.2 H0.6 Z" fill="#343434"/><path d="M8.4 9 H12.6 L10.5 11.6 Z" fill="#343434"/></svg>
<svg style="left:191px;top:719px;" width="11" height="11" viewBox="0 0 11 11"><rect x="0.4" y="0.4" width="10.2" height="10.2" fill="none" stroke="#4c4c4c" stroke-width="0.8"/><path d="M2.4 5.5 H8.6" stroke="#343434" stroke-width="1.3"/><path d="M0.8 5.5 L3.8 2.8 V8.2 Z M10.2 5.5 L7.2 2.8 V8.2 Z" fill="#343434"/></svg>
<div style="left:208px;top:713px;width:1071px;height:15px;background:#8b8b8b;"></div>
<div style="left:208px;top:728px;width:1071px;height:6px;background:#929292;"></div>
<div style="left:208px;top:728px;width:351px;height:6px;background:#5c5c5c;"></div>
<div style="left:208px;top:734px;width:1071px;height:23px;background:#a2a3a6;"></div>
<div style="left:208px;top:734px;width:351px;height:23px;background:#a9aaae;"></div>
<div style="left:208px;top:758px;width:1071px;height:23px;background:#969aa3;"></div>
<div style="left:208px;top:758px;width:351px;height:23px;background:#919ba8;"></div>
<div style="left:208px;top:782px;width:1071px;height:164px;background:#aaaaaa;"></div>
<div style="left:208px;top:733px;width:1071px;height:1px;background:#8a8a8a;"></div>
<div style="left:559px;top:727px;width:720px;height:1px;background:#7c7c7c;"></div>
<div style="left:208px;top:733px;width:351px;height:1px;background:#787878;"></div>
<div style="left:208px;top:757px;width:1071px;height:1px;background:#707072;"></div>
<div style="left:208px;top:781px;width:1071px;height:1px;background:#707072;"></div>
<div style="left:208px;top:745px;width:351px;height:1px;background:#33639f;"></div>
<div style="left:559px;top:745px;width:720px;height:1px;background:#7890b2;"></div>
<div style="left:208px;top:734px;width:26px;height:23px;background:#2a5b92;"></div>
<div style="left:289px;top:728px;width:26px;height:6px;background:#e69b34;"></div>
<div style="left:289px;top:734px;width:26px;height:23px;background:#c4a06e;"></div>
<div style="left:293px;top:745px;width:18px;height:1px;background:#8c7c62;"></div>
<div style="left:289px;top:734px;width:4px;height:23px;background:#e69b34;"></div>
<div style="left:311px;top:734px;width:4px;height:23px;background:#e69b34;"></div>
<div style="left:289px;top:758px;width:4px;height:23px;background:#e69b34;"></div>
<div style="left:311px;top:758px;width:4px;height:23px;background:#e69b34;"></div>
<svg style="left:208px;top:728px;" width="1071" height="54" viewBox="0 0 1071 54"><rect x="26" y="0" width="1" height="54" fill="#727274"/><rect x="53" y="0" width="1" height="54" fill="#727274"/><rect x="80" y="0" width="1" height="54" fill="#727274"/><rect x="107" y="0" width="1" height="54" fill="#727274"/><rect x="134" y="0" width="1" height="54" fill="#727274"/><rect x="161" y="0" width="1" height="54" fill="#727274"/><rect x="188" y="0" width="1" height="54" fill="#727274"/><rect x="215" y="0" width="1" height="54" fill="#727274"/><rect x="242" y="0" width="1" height="54" fill="#727274"/><rect x="269" y="0" width="1" height="54" fill="#727274"/><rect x="296" y="0" width="1" height="54" fill="#727274"/><rect x="323" y="0" width="1" height="54" fill="#727274"/><rect x="350" y="0" width="1" height="54" fill="#727274"/><rect x="377" y="0" width="1" height="54" fill="#727274"/><rect x="404" y="0" width="1" height="54" fill="#727274"/><rect x="431" y="0" width="1" height="54" fill="#727274"/><rect x="458" y="0" width="1" height="54" fill="#727274"/><rect x="485" y="0" width="1" height="54" fill="#727274"/><rect x="512" y="0" width="1" height="54" fill="#727274"/><rect x="539" y="0" width="1" height="54" fill="#727274"/><rect x="566" y="0" width="1" height="54" fill="#727274"/><rect x="593" y="0" width="1" height="54" fill="#727274"/><rect x="620" y="0" width="1" height="54" fill="#727274"/><rect x="647" y="0" width="1" height="54" fill="#727274"/><rect x="674" y="0" width="1" height="54" fill="#727274"/><rect x="701" y="0" width="1" height="54" fill="#727274"/><rect x="728" y="0" width="1" height="54" fill="#727274"/><rect x="755" y="0" width="1" height="54" fill="#727274"/><rect x="782" y="0" width="1" height="54" fill="#727274"/><rect x="809" y="0" width="1" height="54" fill="#727274"/><rect x="836" y="0" width="1" height="54" fill="#727274"/><rect x="863" y="0" width="1" height="54" fill="#727274"/><rect x="890" y="0" width="1" height="54" fill="#727274"/><rect x="917" y="0" width="1" height="54" fill="#727274"/><rect x="944" y="0" width="1" height="54" fill="#727274"/><rect x="971" y="0" width="1" height="54" fill="#727274"/><rect x="998" y="0" width="1" height="54" fill="#727274"/><rect x="1025" y="0" width="1" height="54" fill="#727274"/><rect x="1052" y="0" width="1" height="54" fill="#727274"/><rect x="1079" y="0" width="1" height="54" fill="#727274"/></svg>
<span class="t" style="left:210.30px;top:713.74px;font-size:10.67px;color:#161616;transform:scaleX(1.0700);">0</span>
<div style="left:288px;top:720px;width:1px;height:8px;background:#5f5f5f;"></div>
<span class="t" style="left:291.30px;top:713.74px;font-size:10.67px;color:#161616;transform:scaleX(1.0700);">3</span>
<div style="left:369px;top:720px;width:1px;height:8px;background:#5f5f5f;"></div>
<span class="t" style="left:372.30px;top:713.74px;font-size:10.67px;color:#161616;transform:scaleX(1.0700);">6</span>
<div style="left:450px;top:720px;width:1px;height:8px;background:#5f5f5f;"></div>
<span class="t" style="left:453.30px;top:713.74px;font-size:10.67px;color:#161616;transform:scaleX(1.0700);">9</span>
<div style="left:531px;top:713px;width:1px;height:15px;background:#5f5f5f;"></div>
<div style="left:533px;top:713px;width:1px;height:15px;background:#a2a2a2;"></div>
<span class="t" style="left:534.30px;top:713.74px;font-size:10.67px;color:#161616;transform:scaleX(1.0700);">12</span>
<div style="left:612px;top:720px;width:1px;height:8px;background:#5f5f5f;"></div>
<span class="t" style="left:615.30px;top:713.74px;font-size:10.67px;color:#161616;transform:scaleX(1.0700);">15</span>
<div style="left:693px;top:720px;width:1px;height:8px;background:#5f5f5f;"></div>
<span class="t" style="left:696.30px;top:713.74px;font-size:10.67px;color:#161616;transform:scaleX(1.0700);">18</span>
<div style="left:774px;top:720px;width:1px;height:8px;background:#5f5f5f;"></div>
<span class="t" style="left:777.30px;top:713.74px;font-size:10.67px;color:#161616;transform:scaleX(1.0700);">21</span>
<div style="left:855px;top:720px;width:1px;height:8px;background:#5f5f5f;"></div>
<span class="t" style="left:858.30px;top:713.74px;font-size:10.67px;color:#161616;transform:scaleX(1.0700);">24</span>
<div style="left:936px;top:720px;width:1px;height:8px;background:#5f5f5f;"></div>
<span class="t" style="left:939.30px;top:713.74px;font-size:10.67px;color:#161616;transform:scaleX(1.0700);">27</span>
<div style="left:1017px;top:720px;width:1px;height:8px;background:#5f5f5f;"></div>
<span class="t" style="left:1020.30px;top:713.74px;font-size:10.67px;color:#161616;transform:scaleX(1.0700);">30</span>
<div style="left:1098px;top:720px;width:1px;height:8px;background:#5f5f5f;"></div>
<span class="t" style="left:1101.30px;top:713.74px;font-size:10.67px;color:#161616;transform:scaleX(1.0700);">33</span>
<div style="left:1179px;top:713px;width:1px;height:15px;background:#5f5f5f;"></div>
<div style="left:1181px;top:713px;width:1px;height:15px;background:#a2a2a2;"></div>
<span class="t" style="left:1182.30px;top:713.74px;font-size:10.67px;color:#161616;transform:scaleX(1.0700);">36</span>
<div style="left:1260px;top:720px;width:1px;height:8px;background:#5f5f5f;"></div>
<span class="t" style="left:1263.30px;top:713.74px;font-size:10.67px;color:#161616;transform:scaleX(1.0700);">39</span>
<svg style="left:215.9px;top:740.8px;" width="9.4" height="9.4" viewBox="0 0 9.4 9.4"><path d="M4.7 0 L9.4 4.7 L4.7 9.4 L0 4.7 Z" fill="#c9c9c9"/></svg>
<svg style="left:215.9px;top:764.8px;" width="9.4" height="9.4" viewBox="0 0 9.4 9.4"><path d="M4.7 0 L9.4 4.7 L4.7 9.4 L0 4.7 Z" fill="#2d62a3"/></svg>
<svg style="left:539.9px;top:740.8px;" width="9.4" height="9.4" viewBox="0 0 9.4 9.4"><path d="M4.7 0 L9.4 4.7 L4.7 9.4 L0 4.7 Z" fill="#2d62a3"/></svg>
<svg style="left:539.9px;top:764.8px;" width="9.4" height="9.4" viewBox="0 0 9.4 9.4"><path d="M4.7 0 L9.4 4.7 L4.7 9.4 L0 4.7 Z" fill="#2d62a3"/></svg>
<svg style="left:298.6px;top:766.8px;" width="5.4" height="5.4" viewBox="0 0 5.4 5.4"><circle cx="2.7" cy="2.7" r="2.6" fill="#e69b34"/></svg>
<div style="left:0px;top:734px;width:208px;height:24px;background:#979797;border-left:1px solid #a8a8a8;border-top:1px solid #c2c2c2;"></div>
<div style="left:0px;top:757px;width:208px;height:1px;background:#c4c4c4;"></div>
<div style="left:0px;top:758px;width:208px;height:2px;background:#2a5b92;"></div>
<div style="left:0px;top:760px;width:208px;height:19px;background:#8e8e8e;border-left:1px solid #a0a0a0;"></div>
<div style="left:0px;top:779px;width:208px;height:2px;background:#2a5b92;"></div>
<svg style="left:6px;top:740px;" width="11" height="11" viewBox="0 0 11 11"><g transform="scale(0.69)"><path d="M10.2 0 L15.7 5.5 L9.1 9.9 L8.6 13.9 L2.1 7.2 L6 6.8 Z" fill="#343434"/><path d="M5.6 10.4 L0.3 15.7" stroke="#343434" stroke-width="1.4"/></g></svg>
<svg style="left:6px;top:764px;" width="11" height="11" viewBox="0 0 11 11"><g transform="scale(0.69)"><path d="M10.2 0 L15.7 5.5 L9.1 9.9 L8.6 13.9 L2.1 7.2 L6 6.8 Z" fill="#6e6e6e"/><path d="M5.6 10.4 L0.3 15.7" stroke="#6e6e6e" stroke-width="1.4"/></g></svg>
<span class="t" style="left:21.00px;top:740.34px;font-size:10.9px;color:#202020;transform:scaleX(1.1132);">Paint Layer 1</span>
<span class="t" style="left:21.00px;top:764.34px;font-size:10.9px;color:#202020;transform:scaleX(1.1163);">Transform Mas...</span>
<svg style="left:119px;top:739px;" width="14" height="13" viewBox="0 0 14 13"><path d="M0.4 7.2 C2.6 2.4 11.4 2.4 13.6 7.2" fill="none" stroke="#343434" stroke-width="1.5"/><circle cx="7" cy="5.6" r="3.3" fill="#343434"/><circle cx="5.8" cy="4.4" r="0.9" fill="#bbb" opacity=".55"/><path d="M0.8 8.2 C3 13.4 11 13.4 13.2 8.2" fill="none" stroke="#343434" stroke-width="0.9"/></svg>
<svg style="left:138px;top:738.5px;" width="13" height="14" viewBox="0 0 13 14"><rect x="0.6" y="6.3" width="12" height="7.3" fill="#767676"/><path d="M6.4 0.9 C9.6 1 11.6 3 11.8 6.6" fill="none" stroke="#767676" stroke-width="1.5"/></svg>
<svg style="left:155px;top:739.6px;" width="14" height="13" viewBox="0 0 14 13"><path d="M12.2 1.2 C11 5.4 8.8 11 5.2 11 C2.4 11 0.9 8.8 0.9 6.2 C0.9 3.2 2.7 1 5.3 1 C8.4 1 9.7 5.4 10.5 8.6 C10.9 10.2 11.6 11 12.9 10.7" fill="none" stroke="#848484" stroke-width="1.5"/></svg>
<svg style="left:173px;top:738.5px;" width="14.399999999999999" height="14.399999999999999" viewBox="0 0 14.399999999999999 14.399999999999999"><rect x="0.0" y="0.0" width="4.8" height="4.8" fill="#9a9a9a"/><rect x="4.8" y="0.0" width="4.8" height="4.8" fill="#bdbdbd"/><rect x="9.6" y="0.0" width="4.8" height="4.8" fill="#9a9a9a"/><rect x="0.0" y="4.8" width="4.8" height="4.8" fill="#bdbdbd"/><rect x="4.8" y="4.8" width="4.8" height="4.8" fill="#9a9a9a"/><rect x="9.6" y="4.8" width="4.8" height="4.8" fill="#bdbdbd"/><rect x="0.0" y="9.6" width="4.8" height="4.8" fill="#9a9a9a"/><rect x="4.8" y="9.6" width="4.8" height="4.8" fill="#bdbdbd"/><rect x="9.6" y="9.6" width="4.8" height="4.8" fill="#9a9a9a"/></svg>
<svg style="left:194.4px;top:739.5px;" width="8" height="12" viewBox="0 0 8 12"><path d="M4 0.3 A3.7 3.7 0 0 1 6.4 6.9 L5.8 9.2 H2.2 L1.6 6.9 A3.7 3.7 0 0 1 4 0.3 Z" fill="#767676"/><path d="M2.6 10 H5.4 L4.8 11.4 H3.2 Z" fill="#767676"/></svg>
<svg style="left:173px;top:763px;" width="14" height="13" viewBox="0 0 14 13"><path d="M0.4 7.2 C2.6 2.4 11.4 2.4 13.6 7.2" fill="none" stroke="#343434" stroke-width="1.5"/><circle cx="7" cy="5.6" r="3.3" fill="#343434"/><circle cx="5.8" cy="4.4" r="0.9" fill="#bbb" opacity=".55"/><path d="M0.8 8.2 C3 13.4 11 13.4 13.2 8.2" fill="none" stroke="#343434" stroke-width="0.9"/></svg>
<svg style="left:192.4px;top:762.5px;" width="13" height="14" viewBox="0 0 13 14"><rect x="0.6" y="6.3" width="12" height="7.3" fill="#767676"/><path d="M6.4 0.9 C9.6 1 11.6 3 11.8 6.6" fill="none" stroke="#767676" stroke-width="1.5"/></svg>
<div style="left:0px;top:946px;width:1279px;height:1px;background:#686868;"></div>
<div style="left:0px;top:947px;width:1279px;height:13px;background:#8a8a8a;"></div>
<div style="left:1px;top:947px;width:13px;height:13px;background:linear-gradient(#9a9a9a,#929292);border:1px solid #a6a6a6;"></div>
<div style="left:14px;top:947px;width:1px;height:13px;background:#686868;"></div>
<svg style="left:5px;top:949.5px;" width="4" height="7" viewBox="0 0 4 7"><path d="M4 0 L0 3.5 L4 7 Z" fill="#3c3c3c"/></svg>
<div style="left:15px;top:947px;width:1207px;height:13px;background:linear-gradient(#a0a0a0,#959595);border:1px solid #acacac;"></div>
<div style="left:1222px;top:947px;width:1px;height:13px;background:#686868;"></div>
<div style="left:1264px;top:947px;width:1px;height:13px;background:#686868;"></div>
<div style="left:1265px;top:947px;width:13px;height:13px;background:linear-gradient(#9a9a9a,#929292);border:1px solid #a6a6a6;"></div>
<svg style="left:1270px;top:950px;" width="4" height="7" viewBox="0 0 4 7"><path d="M0 0 L4 3.5 L0 7 Z" fill="#3c3c3c"/></svg>
<div style="left:0px;top:960px;width:1279px;height:1px;background:#686868;"></div>
<div style="left:0px;top:713px;width:1px;height:248px;background:#686868;"></div>
<div style="left:1278px;top:713px;width:1px;height:248px;background:#686868;"></div>
<svg style="left:8px;top:970px;" width="14" height="14" viewBox="0 0 14 14"><rect x="0.5" y="0.5" width="13" height="13" fill="#858585" stroke="#747474" stroke-width="1"/><circle cx="7" cy="7" r="3.4" fill="none" stroke="#747474" stroke-width="0.9" stroke-dasharray="1.4 1.2"/></svg>
<span class="t" style="left:37.50px;top:970.16px;font-size:12.2px;color:#1e1e1e;transform:scaleX(1.0936);">b) Basic-2 Opacity</span>
<span class="t" style="left:218.50px;top:970.16px;font-size:12.2px;color:#1e1e1e;transform:scaleX(1.1119);">RGB/Alpha (8-bit int...-elle-V2-srgbtrc.icc</span>
<div style="left:772px;top:965px;width:157px;height:23px;border:1px solid #6a6a6a;background:#858585;"></div>
<span class="t" style="left:776.50px;top:970.16px;font-size:12.2px;color:#1a1a1a;transform:scaleX(1.1115);">1,024 x 1,024 (18.9 MiB)</span>
<div style="left:814px;top:984px;width:6px;height:1px;background:#1a1a1a;"></div>
<svg style="left:936px;top:965px;" width="23" height="23" viewBox="0 0 23 23"><circle cx="11.5" cy="11.5" r="10.7" fill="#989898" stroke="#646464" stroke-width="0.9"/><path d="M11.5 3 V20 M3 11.5 H11" stroke="#7c7c7c" stroke-width="0.8" stroke-dasharray="1 1.4"/><path d="M10.5 11.5 H20.5" stroke="#2a2a2a" stroke-width="1.2"/><path d="M18.4 9.8 L21.2 11.5 L18.4 13.2 Z" fill="#2a2a2a"/><path d="M10.8 9.8 V13.2" stroke="#2a2a2a" stroke-width="1"/></svg>
<span class="t" style="left:966.50px;top:970.16px;font-size:12.2px;color:#1e1e1e;transform:scaleX(1.0739);">0.00</span>
<span class="t" style="left:992.60px;top:966.75px;font-size:11px;color:#1e1e1e;transform:scaleX(1.0457);">°</span>
<span class="t" style="left:1116.00px;top:970.16px;font-size:12.2px;color:#1e1e1e;transform:scaleX(1.0840);">50.0%</span>
<div style="left:1171px;top:974px;width:82px;height:6px;background:#8f8f8f;border:1px solid #6a6a6a;border-radius:3px;"></div>
<div style="left:1171px;top:974px;width:16px;height:6px;background:#3f7fd0;border:1px solid #2b5a9a;border-radius:3px;"></div>
<div style="left:1183px;top:970px;width:13px;height:13px;background:linear-gradient(#cfcfcf,#a8a8a8);border:1px solid #6e6e6e;border-radius:3px;"></div>
<svg style="left:1258px;top:971px;" width="16" height="13" viewBox="0 0 16 13"><rect x="0.7" y="0.7" width="14.6" height="8.8" fill="none" stroke="#343434" stroke-width="1.3"/><rect x="7" y="4.2" width="1.8" height="1.8" fill="#343434"/><path d="M8 9.6 V12 M3 12.3 H13" stroke="#343434" stroke-width="1.2"/></svg>
<div style="left:0px;top:990.7px;width:1279px;height:1.3px;background:#3e5f8d;"></div>
</body></html>
